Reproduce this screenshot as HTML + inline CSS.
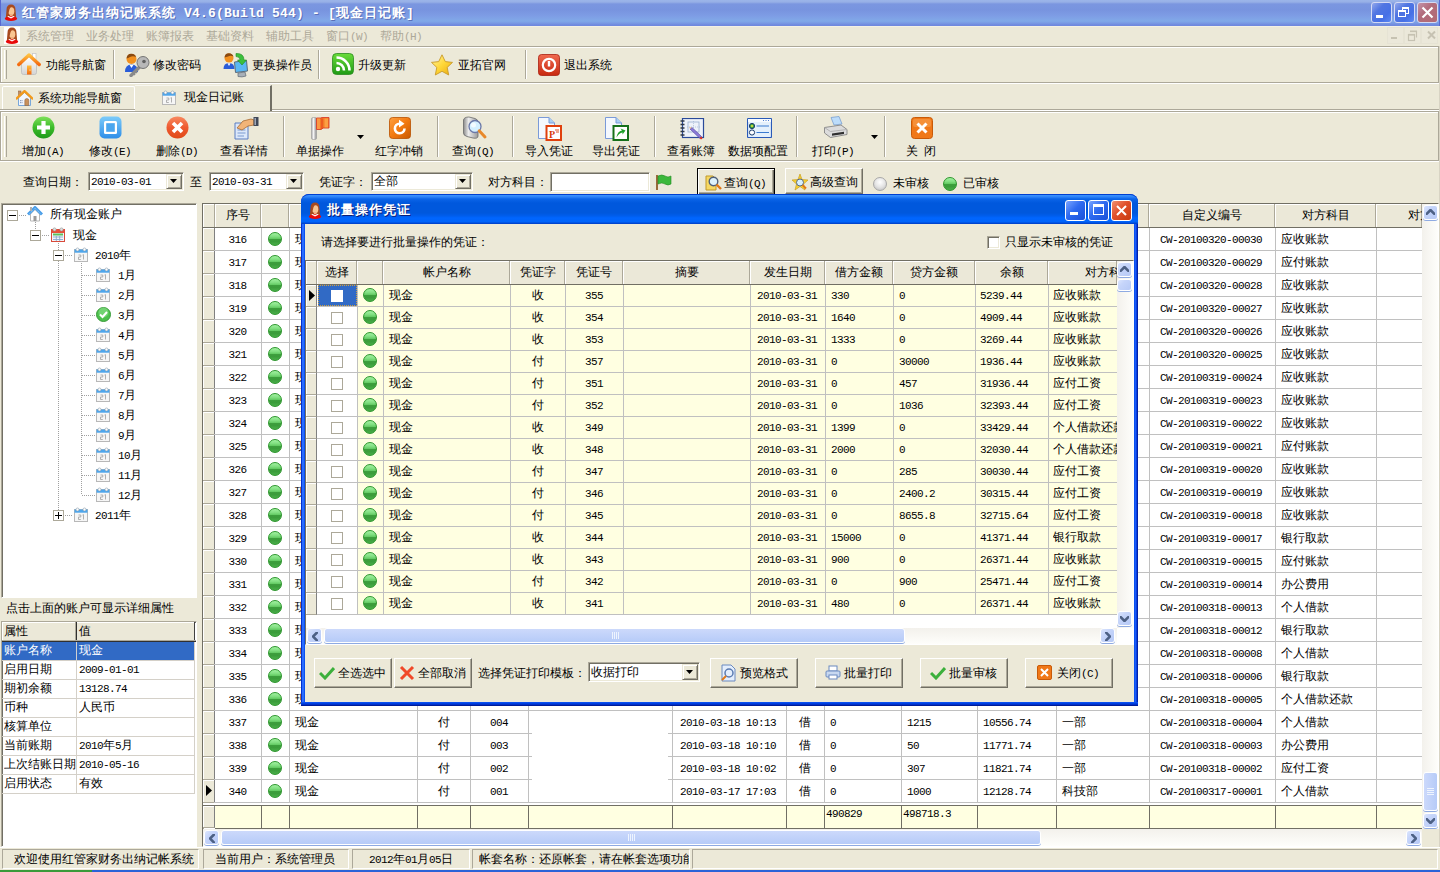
<!DOCTYPE html><html><head><meta charset="utf-8"><style>
*{margin:0;padding:0;box-sizing:border-box}
html,body{width:1440px;height:872px;overflow:hidden;background:#ECE9D8;font-family:"Liberation Sans",sans-serif;font-size:12px;color:#000;position:relative}
div{position:absolute}
.t{white-space:nowrap;line-height:14px;height:14px}
.m{font-family:"Liberation Mono",monospace;font-size:11px;letter-spacing:-0.6px}
.gray{color:#ACA899}
.ball{width:14px;height:14px;border-radius:7px;background:linear-gradient(#A2F2A2 0%,#80DE80 30%,#66CC66 46%,#3E9F3E 50%,#3A9C3A 70%,#4AAE4A 100%);border:1px solid #2C962C}
.hdr{background:#EBE8D8;border-right:1px solid #ACA899;border-bottom:1px solid #ACA899;box-shadow:inset 1px 1px 0 #fff}
.ind{background:#ECE9D8;border-right:1px solid #808080;border-bottom:1px solid #ACA899;box-shadow:inset 1px 1px 0 #fff}
.btn{background:#ECE9D8;border:1px solid #fff;border-right-color:#716F64;border-bottom-color:#716F64;box-shadow:inset -1px -1px 0 #ACA899}
.sbtn{background:linear-gradient(135deg,#DCE6FD 0%,#C6D5FA 35%,#B6C9F6 100%);border:1px solid #fff;border-radius:3px;box-shadow:0 1px 0 #8EAAE2}
.etch{border-top:1px solid #ACA899;border-left:1px solid #ACA899;box-shadow:inset 1px 1px 0 #fff,1px 1px 0 #fff}
</style></head><body>
<div style="left:0px;top:0px;width:1440px;height:26px;background:linear-gradient(#9BB5E9 0px,#97B0E6 2px,#7B96E0 4px,#7894DF 10px,#7E9DE5 16px,#81A9E8 21px,#7A9BE4 23px,#7089DE 25px)"></div>
<svg style="position:absolute;left:4px;top:4px" width="14" height="17" viewBox="0 0 14 17"><path d="M2.5 6 Q2.5 0.5 7 0.5 Q11.5 0.5 11.5 6 L12.2 14 L1.8 14Z" fill="#A84A1E"/><ellipse cx="7.3" cy="7.2" rx="3" ry="3.9" fill="#F9C592"/><rect x="6" y="10" width="2.6" height="3" fill="#F2AE80"/><path d="M3.5 8 Q4 3 7 2.5 Q5 5 4.5 9Z" fill="#A84A1E"/><ellipse cx="7" cy="14.6" rx="6.2" ry="2.3" fill="#E80A0A"/><path d="M3.2 12.6 L7 14.6 L10.8 12.6 L9.3 12 L7 13.2 L4.7 12Z" fill="#fff"/></svg>
<div class="t" style="left:22px;top:5px;height:16px;line-height:16px;color:#fff;font-weight:bold;font-size:13px;letter-spacing:1px;text-shadow:1px 1px 0 #5A70B8">红管家财务出纳记账系统<span style="font-family:Liberation Mono;font-size:13px;letter-spacing:0.2px"> V4.6(Build 544) - [</span>现金日记账<span style="font-family:Liberation Mono;font-size:13px;letter-spacing:0.2px">]</span></div>
<div style="left:1371px;top:2px;width:21px;height:21px;background:linear-gradient(135deg,#93A8EC 0%,#5176E2 35%,#4670E6 70%,#5C88F2 100%);border:1px solid #D4DAF4;border-radius:3px"></div>
<div style="left:1376px;top:15px;width:7px;height:3px;background:#fff"></div>
<div style="left:1394px;top:2px;width:21px;height:21px;background:linear-gradient(135deg,#93A8EC 0%,#5176E2 35%,#4670E6 70%,#5C88F2 100%);border:1px solid #D4DAF4;border-radius:3px"></div>
<div style="left:1402px;top:7px;width:7px;height:7px;border:1px solid #fff;border-top-width:2px"></div>
<div style="left:1398px;top:10px;width:8px;height:7px;border:1px solid #fff;border-top-width:2px;background:#4C72E2"></div>
<div style="left:1417px;top:2px;width:21px;height:21px;background:linear-gradient(135deg,#C494A8 0%,#B26C7C 40%,#B26A74 100%);border:1px solid #D4DAF4;border-radius:3px"></div>
<svg style="position:absolute;left:1421px;top:6px" width="13" height="13" viewBox="0 0 13 13"><path d="M1.5 1.5 L11.5 11.5 M11.5 1.5 L1.5 11.5" stroke="#fff" stroke-width="2.2"/></svg>
<div style="left:1439px;top:0px;width:1px;height:26px;background:#5868D0"></div>
<div style="left:0px;top:0px;width:1px;height:26px;background:#5868D0"></div>
<div style="left:0px;top:26px;width:1440px;height:1px;background:#F3F1E4"></div>
<div style="left:4px;top:27px;width:16px;height:17px;background:#fff"></div>
<svg style="position:absolute;left:5px;top:27px" width="14" height="17" viewBox="0 0 14 17"><path d="M2.5 6 Q2.5 0.5 7 0.5 Q11.5 0.5 11.5 6 L12.2 14 L1.8 14Z" fill="#A84A1E"/><ellipse cx="7.3" cy="7.2" rx="3" ry="3.9" fill="#F9C592"/><rect x="6" y="10" width="2.6" height="3" fill="#F2AE80"/><path d="M3.5 8 Q4 3 7 2.5 Q5 5 4.5 9Z" fill="#A84A1E"/><ellipse cx="7" cy="14.6" rx="6.2" ry="2.3" fill="#E80A0A"/><path d="M3.2 12.6 L7 14.6 L10.8 12.6 L9.3 12 L7 13.2 L4.7 12Z" fill="#fff"/></svg>
<div class="t gray" style="left:26px;top:29px;">系统管理</div>
<div class="t gray" style="left:86px;top:29px;">业务处理</div>
<div class="t gray" style="left:146px;top:29px;">账簿报表</div>
<div class="t gray" style="left:206px;top:29px;">基础资料</div>
<div class="t gray" style="left:266px;top:29px;">辅助工具</div>
<div class="t gray" style="left:326px;top:29px;">窗口<span class="m">(W)</span></div>
<div class="t gray" style="left:380px;top:29px;">帮助<span class="m">(H)</span></div>
<div style="left:1387px;top:27px;width:17px;height:17px;background:#EBE8DA;border:1px solid #E6E3D4"></div>
<div style="left:1404px;top:27px;width:17px;height:17px;background:#EBE8DA;border:1px solid #E6E3D4"></div>
<div style="left:1421px;top:27px;width:17px;height:17px;background:#EBE8DA;border:1px solid #E6E3D4"></div>
<svg style="position:absolute;left:1387px;top:27px" width="53" height="17" viewBox="0 0 53 17"><rect x="4" y="10" width="6" height="2" fill="#C6C2B2"/><path d="M23.5 4.5 H29.5 V10.5" fill="none" stroke="#C6C2B2" stroke-width="1.2"/><rect x="23" y="3.5" width="7" height="1.6" fill="#C6C2B2"/><rect x="21.5" y="7.5" width="6" height="6" fill="none" stroke="#C6C2B2" stroke-width="1.2"/><rect x="21" y="7" width="7" height="1.6" fill="#C6C2B2"/><path d="M41 4.5 L48 11.5 M48 4.5 L41 11.5" stroke="#C6C2B2" stroke-width="2"/></svg>
<div style="left:0px;top:46px;width:1439px;height:37px;border:1px solid #ACA899;box-shadow:inset 1px 1px 0 #fff,0 1px 0 #fff"></div>
<div style="left:4px;top:50px;width:3px;height:29px;border-left:1px solid #fff;border-right:1px solid #ACA899"></div>
<div style="left:113px;top:50px;width:2px;height:29px;border-left:1px solid #ACA899;border-right:1px solid #fff"></div>
<div style="left:318px;top:50px;width:2px;height:29px;border-left:1px solid #ACA899;border-right:1px solid #fff"></div>
<div style="left:525px;top:50px;width:2px;height:29px;border-left:1px solid #ACA899;border-right:1px solid #fff"></div>
<svg style="position:absolute;left:17px;top:52px" width="24" height="24" viewBox="0 0 24 24"><defs><linearGradient id="gh1" x1="0" y1="0" x2="0" y2="1"><stop offset="0" stop-color="#FFFFFF"/><stop offset="1" stop-color="#D4D4D4"/></linearGradient><linearGradient id="gh2" x1="0" y1="0" x2="0" y2="1"><stop offset="0" stop-color="#FFC040"/><stop offset="1" stop-color="#F46A10"/></linearGradient></defs><rect x="15.5" y="1.5" width="3.5" height="7" fill="#fff" stroke="#C8C8C8" stroke-width="0.8"/><path d="M4.5 11 L12 4.5 L19.5 11 V20.5 Q19.5 22.5 17.5 22.5 H6.5 Q4.5 22.5 4.5 20.5Z" fill="url(#gh1)" stroke="#BDBDBD" stroke-width="0.8"/><path d="M1.8 12.5 L12 3 L22.2 12.5" fill="none" stroke="url(#gh2)" stroke-width="3.4" stroke-linejoin="round" stroke-linecap="round"/><rect x="10" y="13.5" width="4.5" height="9" fill="url(#gh2)"/><circle cx="13" cy="18" r="0.6" fill="#fff"/></svg>
<div class="t" style="left:46px;top:58px;">功能导航窗</div>
<svg style="position:absolute;left:124px;top:52px" width="26" height="25" viewBox="0 0 26 25"><path d="M1 20 Q1 12.5 7.5 12.5 Q14 12.5 14 20Z" fill="#2A5CD8"/><path d="M5.5 12.8 L7.5 16 L9.5 12.8Z" fill="#fff"/><circle cx="7.5" cy="7" r="5" fill="#F2901E"/><path d="M2.5 6.5 Q3 1.5 7.5 1.8 Q11.5 2 12 5 Q9 3.5 6 5 Q4 6 2.5 6.5Z" fill="#8A4A10"/><path d="M7 23.5 L17 13.5" stroke="#8A8A8A" stroke-width="3.4" stroke-linecap="round"/><path d="M9 21 L11 23 M11 19 L13 21" stroke="#8A8A8A" stroke-width="1.6"/><circle cx="19" cy="10.5" r="6" fill="#B8B8B8" stroke="#6A6A6A" stroke-width="0.9"/><circle cx="20" cy="9.5" r="1.8" fill="#606060"/></svg>
<div class="t" style="left:153px;top:58px;">修改密码</div>
<svg style="position:absolute;left:223px;top:52px" width="27" height="26" viewBox="0 0 27 26"><path d="M0.5 17 Q0.5 11 6 11 Q11.5 11 11.5 17Z" fill="#2A5CD8"/><path d="M4.5 11.3 L6 14 L7.5 11.3Z" fill="#fff"/><circle cx="6" cy="6" r="4.5" fill="#F2901E"/><path d="M1.5 5.5 Q2 1 6 1.2 Q9.5 1.5 10.5 4.5 Q7.5 3 5 4.5 Q3 5 1.5 5.5Z" fill="#8A4A10"/><path d="M11.5 10 L23.5 8.5 L24.5 19 L12.5 20.5Z" fill="#5AB8F4" stroke="#5A6A7A" stroke-width="1"/><path d="M15 21 L22 20 L23 24 Q19 25.5 15 24.5Z" fill="#A8B0B8" stroke="#6A747E" stroke-width="0.8"/><path d="M13 1.5 Q21 1 21 8 L23.5 8 L19 13 L14.5 8 L17 8 Q17 4.5 13 4.5Z" fill="#3CC03C" stroke="#1E8A1E" stroke-width="0.6"/></svg>
<div class="t" style="left:252px;top:58px;">更换操作员</div>
<svg style="position:absolute;left:332px;top:53px" width="22" height="22" viewBox="0 0 22 22"><defs><linearGradient id="gs" x1="0" y1="0" x2="0" y2="1"><stop offset="0" stop-color="#6ADC3A"/><stop offset="1" stop-color="#1E9A14"/></linearGradient></defs><rect x="0.5" y="0.5" width="21" height="21" rx="4" fill="url(#gs)" stroke="#2A8A1E" stroke-width="0.8"/><circle cx="6" cy="16" r="2.2" fill="#fff"/><path d="M4.5 10 A7.5 7.5 0 0 1 12 17.5" fill="none" stroke="#fff" stroke-width="2.6"/><path d="M4.5 4.5 A13 13 0 0 1 17.5 17.5" fill="none" stroke="#fff" stroke-width="2.6"/></svg>
<div class="t" style="left:358px;top:58px;">升级更新</div>
<svg style="position:absolute;left:431px;top:54px" width="22" height="22" viewBox="0 0 22 22"><defs><linearGradient id="gst" x1="0" y1="0" x2="1" y2="1"><stop offset="0" stop-color="#FFF4A8"/><stop offset="0.5" stop-color="#FFD838"/><stop offset="1" stop-color="#E8A810"/></linearGradient></defs><path d="M11 0.8 L14.3 7.6 L21.5 8.4 L16.2 13.4 L17.7 21 L11 17.3 L4.3 21 L5.8 13.4 L0.5 8.4 L7.7 7.6Z" fill="url(#gst)" stroke="#C89A28" stroke-width="0.9" stroke-linejoin="round"/></svg>
<div class="t" style="left:458px;top:58px;">亚拓官网</div>
<svg style="position:absolute;left:538px;top:54px" width="22" height="22" viewBox="0 0 22 22"><defs><linearGradient id="gpw" x1="0" y1="0" x2="0" y2="1"><stop offset="0" stop-color="#F06A50"/><stop offset="1" stop-color="#C82A10"/></linearGradient></defs><rect x="0.5" y="0.5" width="21" height="21" rx="3" fill="url(#gpw)" stroke="#A82010" stroke-width="0.8"/><circle cx="11" cy="11" r="6.2" fill="none" stroke="#fff" stroke-width="2.2"/><path d="M11 7 V12.5" stroke="#fff" stroke-width="2.4"/></svg>
<div class="t" style="left:564px;top:58px;">退出系统</div>
<div style="left:0px;top:83px;width:1440px;height:1px;background:#fff"></div>
<div style="left:272px;top:109px;width:1168px;height:1px;background:#ACA899"></div>
<div style="left:272px;top:110px;width:1168px;height:1px;background:#fff"></div>
<div style="left:0px;top:109px;width:135px;height:1px;background:#ACA899"></div>
<div style="left:0px;top:110px;width:135px;height:1px;background:#fff"></div>
<div style="left:2px;top:86px;width:133px;height:23px;border-top:1px solid #fff;border-left:1px solid #fff;border-right:1px solid #fff;border-radius:2px 2px 0 0"></div>
<svg style="position:absolute;left:16px;top:90px" width="17" height="16" viewBox="0 0 17 16"><rect x="2.5" y="1" width="2.5" height="5" fill="#C89060" stroke="#8A5A30" stroke-width="0.5"/><path d="M2.5 7.5 L8.5 2.5 L14.5 7.5 V15.5 H2.5Z" fill="#F0F6FE" stroke="#6A9ED8" stroke-width="0.9"/><path d="M0.8 8.5 L8.5 1.2 L16.2 8.5" fill="none" stroke="#F29A1C" stroke-width="2.4" stroke-linejoin="round" stroke-linecap="round"/><path d="M8.8 15.5 V10.5 Q8.8 8.5 10.8 8.5 Q12.8 8.5 12.8 10.5 V15.5Z" fill="#C8905A" stroke="#8A5A30" stroke-width="0.5"/><path d="M4.5 10 V14 M6 10 V14" stroke="#7A8AA8" stroke-width="0.8" stroke-dasharray="1.2 0.8"/></svg>
<div class="t" style="left:38px;top:91px;">系统功能导航窗</div>
<div style="left:135px;top:85px;width:137px;height:26px;border-right:2px solid #716F64;border-top:1px solid #F8F7F0"></div>
<svg style="position:absolute;left:162px;top:90px" width="14" height="15" viewBox="0 0 14 15"><rect x="0.5" y="2.5" width="13" height="12" fill="#F6F6F6" stroke="#B8B8B8"/><rect x="0.5" y="2.5" width="13" height="3.2" fill="#4EA6EC"/><circle cx="3.5" cy="2.5" r="1.5" fill="#fff" stroke="#8A9AAA" stroke-width="0.6"/><circle cx="10.5" cy="2.5" r="1.5" fill="#fff" stroke="#8A9AAA" stroke-width="0.6"/><path d="M4.5 8 H6.8 V10 H4.5 V12.5 H6.8 M8.5 8 L9.5 7.6 V12.5" fill="none" stroke="#A8A8A8" stroke-width="0.9"/></svg>
<div class="t" style="left:184px;top:90px;">现金日记账</div>
<div style="left:0px;top:111px;width:1439px;height:50px;border:1px solid #ACA899;box-shadow:inset 1px 1px 0 #fff,0 1px 0 #fff"></div>
<div style="left:4px;top:116px;width:3px;height:41px;border-left:1px solid #fff;border-right:1px solid #ACA899"></div>
<div style="left:283px;top:116px;width:2px;height:41px;border-left:1px solid #ACA899;border-right:1px solid #fff"></div>
<div style="left:437px;top:116px;width:2px;height:41px;border-left:1px solid #ACA899;border-right:1px solid #fff"></div>
<div style="left:512px;top:116px;width:2px;height:41px;border-left:1px solid #ACA899;border-right:1px solid #fff"></div>
<div style="left:654px;top:116px;width:2px;height:41px;border-left:1px solid #ACA899;border-right:1px solid #fff"></div>
<div style="left:796px;top:116px;width:2px;height:41px;border-left:1px solid #ACA899;border-right:1px solid #fff"></div>
<div style="left:884px;top:116px;width:2px;height:41px;border-left:1px solid #ACA899;border-right:1px solid #fff"></div>
<svg style="position:absolute;left:32px;top:116px" width="23" height="23" viewBox="0 0 23 23"><defs><linearGradient id="ga" x1="0" y1="0" x2="0" y2="1"><stop offset="0" stop-color="#7EE05A"/><stop offset="0.5" stop-color="#3CBB2A"/><stop offset="1" stop-color="#1E9A1A"/></linearGradient></defs><circle cx="11.5" cy="11.5" r="11" fill="url(#ga)"/><path d="M11.5 5 V18 M5 11.5 H18" stroke="#fff" stroke-width="4.2"/></svg>
<div class="t" style="left:-17px;top:144px;width:120px;text-align:center">增加<span class="m">(A)</span></div>
<svg style="position:absolute;left:99px;top:116px" width="23" height="23" viewBox="0 0 23 23"><defs><linearGradient id="ge" x1="0" y1="0" x2="0" y2="1"><stop offset="0" stop-color="#7CCBFA"/><stop offset="1" stop-color="#2E8EE8"/></linearGradient></defs><rect x="0.5" y="0.5" width="22" height="22" rx="5" fill="url(#ge)"/><rect x="5" y="5" width="13" height="13" rx="1.5" fill="#fff"/><rect x="7.2" y="7.2" width="8.6" height="8.6" fill="#4AA6EE"/></svg>
<div class="t" style="left:50px;top:144px;width:120px;text-align:center">修改<span class="m">(E)</span></div>
<svg style="position:absolute;left:166px;top:116px" width="23" height="23" viewBox="0 0 23 23"><defs><linearGradient id="gd" x1="0" y1="0" x2="0" y2="1"><stop offset="0" stop-color="#F88A60"/><stop offset="0.5" stop-color="#EE5A30"/><stop offset="1" stop-color="#E04A18"/></linearGradient></defs><circle cx="11.5" cy="11.5" r="11" fill="url(#gd)"/><path d="M7 7 L16 16 M16 7 L7 16" stroke="#fff" stroke-width="3.6"/></svg>
<div class="t" style="left:117px;top:144px;width:120px;text-align:center">删除<span class="m">(D)</span></div>
<svg style="position:absolute;left:233px;top:116px" width="26" height="24" viewBox="0 0 26 24"><path d="M2 7 H15 V23 H2Z" fill="#DCE8FA" stroke="#5A7CC0"/><path d="M4.5 14 H12.5 M4.5 17 H12.5 M4.5 20 H11" stroke="#7A9AD0"/><path d="M4 12 L10 5 L18 3 L21 4 L21 9 L15 10 L9 14Z" fill="#F2B478" stroke="#A86A30" stroke-width="0.8"/><rect x="20.5" y="1" width="5" height="9" fill="#404858"/><rect x="21.5" y="2" width="1.5" height="7" fill="#A0A8B8"/></svg>
<div class="t" style="left:184px;top:144px;width:120px;text-align:center">查看详情</div>
<svg style="position:absolute;left:310px;top:117px" width="20" height="23" viewBox="0 0 20 23"><defs><linearGradient id="gp" x1="0" x2="1"><stop offset="0" stop-color="#A8A8A8"/><stop offset="0.4" stop-color="#F4F4F4"/><stop offset="1" stop-color="#8A8A8A"/></linearGradient></defs><rect x="1.5" y="0.5" width="5" height="22" rx="1.5" fill="url(#gp)" stroke="#9A9A9A" stroke-width="0.6"/><path d="M6.5 1 H11 Q12 0 13 0.5 H19 V11 H13 Q12 12 11 12.5 H6.5Z" fill="#F47A28" stroke="#D8402A" stroke-width="0.9"/><rect x="7" y="1.5" width="3" height="10.5" fill="#FCA048" opacity="0.8"/><rect x="11" y="1.5" width="2" height="10.5" fill="#E8481E" opacity="0.6"/><rect x="14.5" y="1.5" width="3.5" height="9" fill="#FFB050" opacity="0.7"/></svg>
<div class="t" style="left:260px;top:144px;width:120px;text-align:center">单据操作</div>
<svg style="position:absolute;left:357px;top:135px" width="7" height="4" viewBox="0 0 7 4"><path d="M0 0 H7 L3.5 4Z" fill="#000"/></svg>
<svg style="position:absolute;left:389px;top:117px" width="22" height="22" viewBox="0 0 22 22"><defs><linearGradient id="gr" x1="0" y1="0" x2="1" y2="1"><stop offset="0" stop-color="#FFA040"/><stop offset="0.5" stop-color="#F27A10"/><stop offset="1" stop-color="#C85800"/></linearGradient></defs><rect x="0.5" y="0.5" width="21" height="21" rx="3" fill="url(#gr)" stroke="#B85000" stroke-width="0.8"/><path d="M15.5 11.5 A4.8 4.8 0 1 1 10.5 6.7" fill="none" stroke="#fff" stroke-width="2.6"/><path d="M10 2.8 L15.5 6.8 L10 10.5Z" fill="#fff"/></svg>
<div class="t" style="left:339px;top:144px;width:120px;text-align:center">红字冲销</div>
<svg style="position:absolute;left:462px;top:116px" width="26" height="24" viewBox="0 0 26 24"><defs><linearGradient id="gq" x1="0" x2="1"><stop offset="0" stop-color="#8A8A8A"/><stop offset="0.35" stop-color="#EDEDED"/><stop offset="1" stop-color="#9A9A9A"/></linearGradient></defs><path d="M1.5 4 Q2 1 7 1 L13 2.5 Q16 3.5 16 6 V20 Q16 23 11 22 L5 20.5 Q1.5 19.5 1.5 17Z" fill="url(#gq)" stroke="#6A6A6A" stroke-width="0.8"/><circle cx="13" cy="10.5" r="6" fill="#D4F0FF" stroke="#6A78A8" stroke-width="1.3"/><circle cx="11.5" cy="9" r="2.5" fill="#fff" opacity="0.7"/><path d="M17.2 14.8 L23 21" stroke="#E8882A" stroke-width="3" stroke-linecap="round"/></svg>
<div class="t" style="left:413px;top:144px;width:120px;text-align:center">查询<span class="m">(Q)</span></div>
<svg style="position:absolute;left:537px;top:116px" width="26" height="25" viewBox="0 0 26 25"><path d="M1.5 1.5 H12 L17.5 7 V22.5 H1.5Z" fill="#F4F8FE" stroke="#7A9AD8"/><path d="M12 1.5 V7 H17.5" fill="#A8D0F4" stroke="#7A9AD8"/><rect x="9.5" y="10" width="14.5" height="14" fill="#fff" stroke="#E0400C" stroke-width="2"/><text x="15" y="22" font-size="10" font-weight="bold" fill="#D83A0A" font-family="Liberation Serif" text-anchor="middle">P</text><path d="M18 14 H22 M19 16 H22" stroke="#D83A0A" stroke-width="0.9"/></svg>
<div class="t" style="left:489px;top:144px;width:120px;text-align:center">导入凭证</div>
<svg style="position:absolute;left:604px;top:116px" width="26" height="25" viewBox="0 0 26 25"><path d="M1.5 1.5 H12 L17.5 7 V22.5 H1.5Z" fill="#F4F8FE" stroke="#7A9AD8"/><path d="M12 1.5 V7 H17.5" fill="#A8D0F4" stroke="#7A9AD8"/><rect x="9.5" y="10" width="14.5" height="14" fill="#fff" stroke="#16701A" stroke-width="2"/><path d="M12.5 21.5 Q13.5 15 18 14.5 L16.5 12.5 L21.5 14.5 L18.5 18.5 L18.5 16.5 Q15 17 12.5 21.5Z" fill="#1EA02A"/></svg>
<div class="t" style="left:556px;top:144px;width:120px;text-align:center">导出凭证</div>
<svg style="position:absolute;left:680px;top:118px" width="25" height="23" viewBox="0 0 25 23"><rect x="2.5" y="0.5" width="21" height="19" fill="#EEF2FA" stroke="#2A4A9A" stroke-width="1.2"/><path d="M0.5 3 H4.5 M0.5 6.5 H4.5 M0.5 10 H4.5 M0.5 13.5 H4.5 M0.5 17 H4.5" stroke="#303848" stroke-width="1.3"/><rect x="8" y="4" width="11" height="10" fill="none" stroke="#9AB0D0" stroke-width="0.8"/><path d="M13.5 3 V15 M7 9 H20" stroke="#9AB0D0" stroke-width="0.6" stroke-dasharray="1 1"/><path d="M10 11 L19.5 20 L21.5 18.5 L12 9.5Z" fill="#8A7AD8" stroke="#4A3A98" stroke-width="0.6"/><path d="M9 9 L10 11 L12 9.5Z" fill="#F0C090"/><path d="M19.5 20 L21.5 18.5 L22.5 20.5 L21 21.5Z" fill="#E03020"/></svg>
<div class="t" style="left:631px;top:144px;width:120px;text-align:center">查看账簿</div>
<svg style="position:absolute;left:747px;top:118px" width="25" height="20" viewBox="0 0 25 20"><rect x="0.5" y="0.5" width="24" height="19" rx="1" fill="#E4F0FC" stroke="#2A5AB8" stroke-width="1.2"/><rect x="1" y="1" width="23" height="3" fill="#F8FBFF"/><path d="M16 2.5 H17 M18.5 2.5 H19.5 M21 2.5 H22" stroke="#5080D0" stroke-width="1.2"/><circle cx="5" cy="8" r="2.6" fill="#40A840" stroke="#1A3A6A" stroke-width="1"/><circle cx="5" cy="8" r="1" fill="#F0E040"/><circle cx="5" cy="14.5" r="2.6" fill="#fff" stroke="#1A3A6A" stroke-width="1"/><path d="M9.5 8 H22 M9.5 14.5 H22" stroke="#3A7AD0" stroke-width="1.2"/></svg>
<div class="t" style="left:698px;top:144px;width:120px;text-align:center">数据项配置</div>
<svg style="position:absolute;left:823px;top:116px" width="25" height="23" viewBox="0 0 25 23"><path d="M8 1.5 L16 0.5 L19 8 L11 9Z" fill="#BCDCFA" stroke="#7AA0D0" stroke-width="0.8"/><path d="M1.5 11.5 L18 9 L24 13.5 V18.5 L7.5 21.5 L1.5 17Z" fill="#DCDCDC" stroke="#7A7A7A" stroke-width="0.8"/><path d="M1.5 11.5 L7.5 15.5 L24 13.5" fill="none" stroke="#A8A8A8" stroke-width="0.8"/><path d="M9 17.5 L21 15.8 V18 L9 19.8Z" fill="#303030"/></svg>
<div class="t" style="left:773px;top:144px;width:120px;text-align:center">打印<span class="m">(P)</span></div>
<svg style="position:absolute;left:871px;top:135px" width="7" height="4" viewBox="0 0 7 4"><path d="M0 0 H7 L3.5 4Z" fill="#000"/></svg>
<svg style="position:absolute;left:911px;top:117px" width="22" height="22" viewBox="0 0 22 22"><rect x="0.5" y="0.5" width="21" height="21" rx="3" fill="#F07818" stroke="#C85A08"/><rect x="2" y="2" width="18" height="8" rx="2" fill="#F8A050" opacity="0.6"/><path d="M6.5 6.5 L15.5 15.5 M15.5 6.5 L6.5 15.5" stroke="#fff" stroke-width="3"/></svg>
<div class="t" style="left:861px;top:144px;width:120px;text-align:center">关&nbsp;&nbsp;闭</div>
<div class="t" style="left:23px;top:175px;">查询日期：</div>
<div style="left:88px;top:172px;width:96px;height:19px;background:#fff;border:1px solid #ACA899;border-right-color:#fff;border-bottom-color:#fff;box-shadow:inset 1px 1px 0 #716F64,inset -1px -1px 0 #ECE9D8"></div>
<div style="left:166px;top:174px;width:16px;height:15px;background:#ECE9D8;border:1px solid #ECE9D8;border-right-color:#716F64;border-bottom-color:#716F64;box-shadow:inset 1px 1px 0 #fff,inset -1px -1px 0 #ACA899"></div>
<svg style="position:absolute;left:170px;top:179px" width="7" height="4" viewBox="0 0 7 4"><path d="M0 0 H7 L3.5 4Z" fill="#000"/></svg>
<div class="t" style="left:91px;top:174px;"><span class="m">2010-03-01</span></div>
<div class="t" style="left:190px;top:175px;">至</div>
<div style="left:209px;top:172px;width:95px;height:19px;background:#fff;border:1px solid #ACA899;border-right-color:#fff;border-bottom-color:#fff;box-shadow:inset 1px 1px 0 #716F64,inset -1px -1px 0 #ECE9D8"></div>
<div style="left:286px;top:174px;width:16px;height:15px;background:#ECE9D8;border:1px solid #ECE9D8;border-right-color:#716F64;border-bottom-color:#716F64;box-shadow:inset 1px 1px 0 #fff,inset -1px -1px 0 #ACA899"></div>
<svg style="position:absolute;left:290px;top:179px" width="7" height="4" viewBox="0 0 7 4"><path d="M0 0 H7 L3.5 4Z" fill="#000"/></svg>
<div class="t" style="left:212px;top:174px;"><span class="m">2010-03-31</span></div>
<div class="t" style="left:319px;top:175px;">凭证字：</div>
<div style="left:371px;top:172px;width:102px;height:19px;background:#fff;border:1px solid #ACA899;border-right-color:#fff;border-bottom-color:#fff;box-shadow:inset 1px 1px 0 #716F64,inset -1px -1px 0 #ECE9D8"></div>
<div style="left:455px;top:174px;width:16px;height:15px;background:#ECE9D8;border:1px solid #ECE9D8;border-right-color:#716F64;border-bottom-color:#716F64;box-shadow:inset 1px 1px 0 #fff,inset -1px -1px 0 #ACA899"></div>
<svg style="position:absolute;left:459px;top:179px" width="7" height="4" viewBox="0 0 7 4"><path d="M0 0 H7 L3.5 4Z" fill="#000"/></svg>
<div class="t" style="left:374px;top:174px;">全部</div>
<div class="t" style="left:488px;top:175px;">对方科目：</div>
<div style="left:550px;top:172px;width:100px;height:20px;background:#fff;border:1px solid #ACA899;border-right-color:#fff;border-bottom-color:#fff;box-shadow:inset 1px 1px 0 #716F64,inset -1px -1px 0 #ECE9D8"></div>
<svg style="position:absolute;left:655px;top:174px" width="17" height="16" viewBox="0 0 17 16"><rect x="1" y="1" width="2" height="15" fill="#9A6A3A"/><path d="M3 2 Q7 0 10 2 Q13 4 16 2 V10 Q13 12 10 10 Q7 8 3 10Z" fill="#3CB83C" stroke="#208A20" stroke-width="0.6"/></svg>
<div style="left:697px;top:168px;width:78px;height:27px;background:#ECE9D8;border:1px solid #000;box-shadow:inset 1px 1px 0 #fff,inset -1px -1px 0 #716F64,inset -2px -2px 0 #ACA899"></div>
<svg style="position:absolute;left:705px;top:174px" width="17" height="17" viewBox="0 0 17 17"><path d="M1 2 H8 L11 5 V16 H1Z" fill="#F6D862" stroke="#C09828"/><circle cx="8.5" cy="7.5" r="4.3" fill="#DDF2FC" stroke="#50607A" stroke-width="1.4"/><path d="M11.5 10.5 L16 15" stroke="#E07818" stroke-width="2.4"/></svg>
<div class="t" style="left:724px;top:176px;">查询<span class="m">(Q)</span></div>
<div style="left:785px;top:168px;width:78px;height:26px;border:1px solid #fff;border-right-color:#716F64;border-bottom-color:#716F64;box-shadow:inset -1px -1px 0 #ACA899"></div>
<svg style="position:absolute;left:791px;top:173px" width="18" height="18" viewBox="0 0 18 18"><path d="M9 1 L11 6.5 L17 7 L12.5 11 L14 17 L9 13.5 L4 17 L5.5 11 L1 7 L7 6.5Z" fill="#F8D030" stroke="#C8A020" stroke-width="0.7"/><circle cx="9" cy="9.5" r="3.5" fill="#D8F0FC" stroke="#5A6A80"/><path d="M11.5 12 L15 15.5" stroke="#E07818" stroke-width="2"/></svg>
<div class="t" style="left:810px;top:175px;">高级查询</div>
<div style="left:873px;top:177px;width:14px;height:14px;border-radius:7px;background:radial-gradient(circle at 50% 35%,#fff,#E4E4E4 50%,#B8B8B8);border:1px solid #A8A8A8"></div>
<div class="t" style="left:893px;top:176px;">未审核</div>
<div class="ball" style="left:943px;top:177px;width:14px;height:14px;border-radius:7.0px"></div>
<div class="t" style="left:963px;top:176px;">已审核</div>
<div style="left:1px;top:203px;width:196px;height:395px;background:#fff;border:1px solid #ACA899;border-right-color:#fff;border-bottom-color:#fff;box-shadow:inset 1px 1px 0 #716F64"></div>
<div style="left:7px;top:210px;width:11px;height:11px;background:#fff;border:1px solid #ACA899"></div>
<div style="left:9px;top:215px;width:7px;height:1px;background:#000"></div>
<div style="left:19px;top:215px;width:7px;height:1px;background:repeating-linear-gradient(90deg,#A0A0A0 0 1px,transparent 1px 2px)"></div>
<svg style="position:absolute;left:27px;top:206px" width="16" height="16" viewBox="0 0 16 16"><path d="M3.5 8 L8 3.5 L12.5 8 V15 H3.5Z" fill="#fff" stroke="#B8B8B8"/><rect x="6.5" y="10" width="3" height="5" fill="#9A9A9A"/><path d="M1 8.5 L8 1.5 L15 8.5" fill="none" stroke="#4A9EE8" stroke-width="3" stroke-linejoin="round"/><path d="M2.5 7.5 L8 2.2 L13.5 7.5" fill="none" stroke="#A8D8FA" stroke-width="0.8" stroke-dasharray="1 1"/><rect x="3" y="1" width="2" height="4" fill="#B0B0B0"/></svg>
<div class="t" style="left:50px;top:207px;">所有现金账户</div>
<div style="left:35px;top:222px;width:1px;height:13px;background:repeating-linear-gradient(#A0A0A0 0 1px,transparent 1px 2px)"></div>
<div style="left:30px;top:230px;width:11px;height:11px;background:#fff;border:1px solid #ACA899"></div>
<div style="left:32px;top:235px;width:7px;height:1px;background:#000"></div>
<div style="left:42px;top:235px;width:8px;height:1px;background:repeating-linear-gradient(90deg,#A0A0A0 0 1px,transparent 1px 2px)"></div>
<svg style="position:absolute;left:51px;top:227px" width="15" height="15" viewBox="0 0 15 15"><rect x="0.5" y="2.5" width="13" height="12" fill="#F4F6FA" stroke="#D84A3A"/><rect x="0.5" y="2.5" width="13" height="3.5" fill="#E8503A"/><circle cx="3.5" cy="2.5" r="1.6" fill="#E0E0E0" stroke="#909090" stroke-width="0.6"/><circle cx="10.5" cy="2.5" r="1.6" fill="#E0E0E0" stroke="#909090" stroke-width="0.6"/><rect x="2" y="6.5" width="10" height="2" fill="#5CC05C"/><path d="M2 10 H12 M2 12.5 H12 M5.3 9 V14 M8.7 9 V14" stroke="#8AAAD0" stroke-width="0.9"/></svg>
<div class="t" style="left:73px;top:228px;">现金</div>
<div style="left:58px;top:243px;width:1px;height:12px;background:repeating-linear-gradient(#A0A0A0 0 1px,transparent 1px 2px)"></div>
<div style="left:53px;top:250px;width:11px;height:11px;background:#fff;border:1px solid #ACA899"></div>
<div style="left:55px;top:255px;width:7px;height:1px;background:#000"></div>
<div style="left:65px;top:255px;width:8px;height:1px;background:repeating-linear-gradient(90deg,#A0A0A0 0 1px,transparent 1px 2px)"></div>
<svg style="position:absolute;left:74px;top:247px" width="14" height="15" viewBox="0 0 14 15"><rect x="0.5" y="2.5" width="13" height="12" fill="#F6F6F6" stroke="#B8B8B8"/><rect x="0.5" y="2.5" width="13" height="3.2" fill="#4EA6EC"/><circle cx="3.5" cy="2.5" r="1.5" fill="#fff" stroke="#8A9AAA" stroke-width="0.6"/><circle cx="10.5" cy="2.5" r="1.5" fill="#fff" stroke="#8A9AAA" stroke-width="0.6"/><path d="M4.5 8 H6.8 V10 H4.5 V12.5 H6.8 M8.5 8 L9.5 7.6 V12.5" fill="none" stroke="#A8A8A8" stroke-width="0.9"/></svg>
<div class="t" style="left:95px;top:248px;"><span class="m">2010</span>年</div>
<div style="left:58px;top:261px;width:1px;height:254px;background:repeating-linear-gradient(#A0A0A0 0 1px,transparent 1px 2px)"></div>
<div style="left:81px;top:263px;width:1px;height:232px;background:repeating-linear-gradient(#A0A0A0 0 1px,transparent 1px 2px)"></div>
<div style="left:82px;top:275px;width:13px;height:1px;background:repeating-linear-gradient(90deg,#A0A0A0 0 1px,transparent 1px 2px)"></div>
<svg style="position:absolute;left:96px;top:267px" width="14" height="15" viewBox="0 0 14 15"><rect x="0.5" y="2.5" width="13" height="12" fill="#F6F6F6" stroke="#B8B8B8"/><rect x="0.5" y="2.5" width="13" height="3.2" fill="#4EA6EC"/><circle cx="3.5" cy="2.5" r="1.5" fill="#fff" stroke="#8A9AAA" stroke-width="0.6"/><circle cx="10.5" cy="2.5" r="1.5" fill="#fff" stroke="#8A9AAA" stroke-width="0.6"/><path d="M4.5 8 H6.8 V10 H4.5 V12.5 H6.8 M8.5 8 L9.5 7.6 V12.5" fill="none" stroke="#A8A8A8" stroke-width="0.9"/></svg>
<div class="t" style="left:118px;top:268px;"><span class="m">1</span>月</div>
<div style="left:82px;top:295px;width:13px;height:1px;background:repeating-linear-gradient(90deg,#A0A0A0 0 1px,transparent 1px 2px)"></div>
<svg style="position:absolute;left:96px;top:287px" width="14" height="15" viewBox="0 0 14 15"><rect x="0.5" y="2.5" width="13" height="12" fill="#F6F6F6" stroke="#B8B8B8"/><rect x="0.5" y="2.5" width="13" height="3.2" fill="#4EA6EC"/><circle cx="3.5" cy="2.5" r="1.5" fill="#fff" stroke="#8A9AAA" stroke-width="0.6"/><circle cx="10.5" cy="2.5" r="1.5" fill="#fff" stroke="#8A9AAA" stroke-width="0.6"/><path d="M4.5 8 H6.8 V10 H4.5 V12.5 H6.8 M8.5 8 L9.5 7.6 V12.5" fill="none" stroke="#A8A8A8" stroke-width="0.9"/></svg>
<div class="t" style="left:118px;top:288px;"><span class="m">2</span>月</div>
<div style="left:82px;top:315px;width:13px;height:1px;background:repeating-linear-gradient(90deg,#A0A0A0 0 1px,transparent 1px 2px)"></div>
<svg style="position:absolute;left:96px;top:307px" width="15" height="15" viewBox="0 0 15 15"><circle cx="7.5" cy="7.5" r="7" fill="#4CC04C" stroke="#3A9A3A"/><circle cx="7.5" cy="5.5" r="5" fill="#8AE08A" opacity="0.6"/><path d="M4 7.5 L6.5 10 L11 5" fill="none" stroke="#fff" stroke-width="2"/></svg>
<div class="t" style="left:118px;top:308px;"><span class="m">3</span>月</div>
<div style="left:82px;top:335px;width:13px;height:1px;background:repeating-linear-gradient(90deg,#A0A0A0 0 1px,transparent 1px 2px)"></div>
<svg style="position:absolute;left:96px;top:327px" width="14" height="15" viewBox="0 0 14 15"><rect x="0.5" y="2.5" width="13" height="12" fill="#F6F6F6" stroke="#B8B8B8"/><rect x="0.5" y="2.5" width="13" height="3.2" fill="#4EA6EC"/><circle cx="3.5" cy="2.5" r="1.5" fill="#fff" stroke="#8A9AAA" stroke-width="0.6"/><circle cx="10.5" cy="2.5" r="1.5" fill="#fff" stroke="#8A9AAA" stroke-width="0.6"/><path d="M4.5 8 H6.8 V10 H4.5 V12.5 H6.8 M8.5 8 L9.5 7.6 V12.5" fill="none" stroke="#A8A8A8" stroke-width="0.9"/></svg>
<div class="t" style="left:118px;top:328px;"><span class="m">4</span>月</div>
<div style="left:82px;top:355px;width:13px;height:1px;background:repeating-linear-gradient(90deg,#A0A0A0 0 1px,transparent 1px 2px)"></div>
<svg style="position:absolute;left:96px;top:347px" width="14" height="15" viewBox="0 0 14 15"><rect x="0.5" y="2.5" width="13" height="12" fill="#F6F6F6" stroke="#B8B8B8"/><rect x="0.5" y="2.5" width="13" height="3.2" fill="#4EA6EC"/><circle cx="3.5" cy="2.5" r="1.5" fill="#fff" stroke="#8A9AAA" stroke-width="0.6"/><circle cx="10.5" cy="2.5" r="1.5" fill="#fff" stroke="#8A9AAA" stroke-width="0.6"/><path d="M4.5 8 H6.8 V10 H4.5 V12.5 H6.8 M8.5 8 L9.5 7.6 V12.5" fill="none" stroke="#A8A8A8" stroke-width="0.9"/></svg>
<div class="t" style="left:118px;top:348px;"><span class="m">5</span>月</div>
<div style="left:82px;top:375px;width:13px;height:1px;background:repeating-linear-gradient(90deg,#A0A0A0 0 1px,transparent 1px 2px)"></div>
<svg style="position:absolute;left:96px;top:367px" width="14" height="15" viewBox="0 0 14 15"><rect x="0.5" y="2.5" width="13" height="12" fill="#F6F6F6" stroke="#B8B8B8"/><rect x="0.5" y="2.5" width="13" height="3.2" fill="#4EA6EC"/><circle cx="3.5" cy="2.5" r="1.5" fill="#fff" stroke="#8A9AAA" stroke-width="0.6"/><circle cx="10.5" cy="2.5" r="1.5" fill="#fff" stroke="#8A9AAA" stroke-width="0.6"/><path d="M4.5 8 H6.8 V10 H4.5 V12.5 H6.8 M8.5 8 L9.5 7.6 V12.5" fill="none" stroke="#A8A8A8" stroke-width="0.9"/></svg>
<div class="t" style="left:118px;top:368px;"><span class="m">6</span>月</div>
<div style="left:82px;top:395px;width:13px;height:1px;background:repeating-linear-gradient(90deg,#A0A0A0 0 1px,transparent 1px 2px)"></div>
<svg style="position:absolute;left:96px;top:387px" width="14" height="15" viewBox="0 0 14 15"><rect x="0.5" y="2.5" width="13" height="12" fill="#F6F6F6" stroke="#B8B8B8"/><rect x="0.5" y="2.5" width="13" height="3.2" fill="#4EA6EC"/><circle cx="3.5" cy="2.5" r="1.5" fill="#fff" stroke="#8A9AAA" stroke-width="0.6"/><circle cx="10.5" cy="2.5" r="1.5" fill="#fff" stroke="#8A9AAA" stroke-width="0.6"/><path d="M4.5 8 H6.8 V10 H4.5 V12.5 H6.8 M8.5 8 L9.5 7.6 V12.5" fill="none" stroke="#A8A8A8" stroke-width="0.9"/></svg>
<div class="t" style="left:118px;top:388px;"><span class="m">7</span>月</div>
<div style="left:82px;top:415px;width:13px;height:1px;background:repeating-linear-gradient(90deg,#A0A0A0 0 1px,transparent 1px 2px)"></div>
<svg style="position:absolute;left:96px;top:407px" width="14" height="15" viewBox="0 0 14 15"><rect x="0.5" y="2.5" width="13" height="12" fill="#F6F6F6" stroke="#B8B8B8"/><rect x="0.5" y="2.5" width="13" height="3.2" fill="#4EA6EC"/><circle cx="3.5" cy="2.5" r="1.5" fill="#fff" stroke="#8A9AAA" stroke-width="0.6"/><circle cx="10.5" cy="2.5" r="1.5" fill="#fff" stroke="#8A9AAA" stroke-width="0.6"/><path d="M4.5 8 H6.8 V10 H4.5 V12.5 H6.8 M8.5 8 L9.5 7.6 V12.5" fill="none" stroke="#A8A8A8" stroke-width="0.9"/></svg>
<div class="t" style="left:118px;top:408px;"><span class="m">8</span>月</div>
<div style="left:82px;top:435px;width:13px;height:1px;background:repeating-linear-gradient(90deg,#A0A0A0 0 1px,transparent 1px 2px)"></div>
<svg style="position:absolute;left:96px;top:427px" width="14" height="15" viewBox="0 0 14 15"><rect x="0.5" y="2.5" width="13" height="12" fill="#F6F6F6" stroke="#B8B8B8"/><rect x="0.5" y="2.5" width="13" height="3.2" fill="#4EA6EC"/><circle cx="3.5" cy="2.5" r="1.5" fill="#fff" stroke="#8A9AAA" stroke-width="0.6"/><circle cx="10.5" cy="2.5" r="1.5" fill="#fff" stroke="#8A9AAA" stroke-width="0.6"/><path d="M4.5 8 H6.8 V10 H4.5 V12.5 H6.8 M8.5 8 L9.5 7.6 V12.5" fill="none" stroke="#A8A8A8" stroke-width="0.9"/></svg>
<div class="t" style="left:118px;top:428px;"><span class="m">9</span>月</div>
<div style="left:82px;top:455px;width:13px;height:1px;background:repeating-linear-gradient(90deg,#A0A0A0 0 1px,transparent 1px 2px)"></div>
<svg style="position:absolute;left:96px;top:447px" width="14" height="15" viewBox="0 0 14 15"><rect x="0.5" y="2.5" width="13" height="12" fill="#F6F6F6" stroke="#B8B8B8"/><rect x="0.5" y="2.5" width="13" height="3.2" fill="#4EA6EC"/><circle cx="3.5" cy="2.5" r="1.5" fill="#fff" stroke="#8A9AAA" stroke-width="0.6"/><circle cx="10.5" cy="2.5" r="1.5" fill="#fff" stroke="#8A9AAA" stroke-width="0.6"/><path d="M4.5 8 H6.8 V10 H4.5 V12.5 H6.8 M8.5 8 L9.5 7.6 V12.5" fill="none" stroke="#A8A8A8" stroke-width="0.9"/></svg>
<div class="t" style="left:118px;top:448px;"><span class="m">10</span>月</div>
<div style="left:82px;top:475px;width:13px;height:1px;background:repeating-linear-gradient(90deg,#A0A0A0 0 1px,transparent 1px 2px)"></div>
<svg style="position:absolute;left:96px;top:467px" width="14" height="15" viewBox="0 0 14 15"><rect x="0.5" y="2.5" width="13" height="12" fill="#F6F6F6" stroke="#B8B8B8"/><rect x="0.5" y="2.5" width="13" height="3.2" fill="#4EA6EC"/><circle cx="3.5" cy="2.5" r="1.5" fill="#fff" stroke="#8A9AAA" stroke-width="0.6"/><circle cx="10.5" cy="2.5" r="1.5" fill="#fff" stroke="#8A9AAA" stroke-width="0.6"/><path d="M4.5 8 H6.8 V10 H4.5 V12.5 H6.8 M8.5 8 L9.5 7.6 V12.5" fill="none" stroke="#A8A8A8" stroke-width="0.9"/></svg>
<div class="t" style="left:118px;top:468px;"><span class="m">11</span>月</div>
<div style="left:82px;top:495px;width:13px;height:1px;background:repeating-linear-gradient(90deg,#A0A0A0 0 1px,transparent 1px 2px)"></div>
<svg style="position:absolute;left:96px;top:487px" width="14" height="15" viewBox="0 0 14 15"><rect x="0.5" y="2.5" width="13" height="12" fill="#F6F6F6" stroke="#B8B8B8"/><rect x="0.5" y="2.5" width="13" height="3.2" fill="#4EA6EC"/><circle cx="3.5" cy="2.5" r="1.5" fill="#fff" stroke="#8A9AAA" stroke-width="0.6"/><circle cx="10.5" cy="2.5" r="1.5" fill="#fff" stroke="#8A9AAA" stroke-width="0.6"/><path d="M4.5 8 H6.8 V10 H4.5 V12.5 H6.8 M8.5 8 L9.5 7.6 V12.5" fill="none" stroke="#A8A8A8" stroke-width="0.9"/></svg>
<div class="t" style="left:118px;top:488px;"><span class="m">12</span>月</div>
<div style="left:53px;top:510px;width:11px;height:11px;background:#fff;border:1px solid #ACA899"></div>
<div style="left:55px;top:515px;width:7px;height:1px;background:#000"></div>
<div style="left:58px;top:512px;width:1px;height:7px;background:#000"></div>
<div style="left:65px;top:515px;width:8px;height:1px;background:repeating-linear-gradient(90deg,#A0A0A0 0 1px,transparent 1px 2px)"></div>
<svg style="position:absolute;left:74px;top:507px" width="14" height="15" viewBox="0 0 14 15"><rect x="0.5" y="2.5" width="13" height="12" fill="#F6F6F6" stroke="#B8B8B8"/><rect x="0.5" y="2.5" width="13" height="3.2" fill="#4EA6EC"/><circle cx="3.5" cy="2.5" r="1.5" fill="#fff" stroke="#8A9AAA" stroke-width="0.6"/><circle cx="10.5" cy="2.5" r="1.5" fill="#fff" stroke="#8A9AAA" stroke-width="0.6"/><path d="M4.5 8 H6.8 V10 H4.5 V12.5 H6.8 M8.5 8 L9.5 7.6 V12.5" fill="none" stroke="#A8A8A8" stroke-width="0.9"/></svg>
<div class="t" style="left:95px;top:508px;"><span class="m">2011</span>年</div>
<div class="t" style="left:6px;top:601px;">点击上面的账户可显示详细属性</div>
<div style="left:1px;top:621px;width:196px;height:226px;background:#fff;border:1px solid #ACA899;border-right-color:#fff;border-bottom-color:#fff;box-shadow:inset 1px 1px 0 #716F64"></div>
<div style="left:2px;top:622px;width:74px;height:19px;background:#EBE8D8;box-shadow:inset 1px 1px 0 #fff"></div>
<div style="left:76px;top:622px;width:119px;height:19px;background:#EBE8D8;box-shadow:inset 1px 1px 0 #fff;border-right:1px solid #404040"></div>
<div style="left:75px;top:622px;width:2px;height:19px;background:linear-gradient(90deg,#ACA899 50%,#303030 50%)"></div>
<div style="left:2px;top:640px;width:194px;height:2px;background:linear-gradient(#ACA899 50%,#303030 50%)"></div>
<div class="t" style="left:4px;top:624px;">属性</div>
<div class="t" style="left:79px;top:624px;">值</div>
<div style="left:2px;top:642px;width:193px;height:18px;background:#316AC5"></div>
<div style="left:76px;top:642px;width:1px;height:18px;background:#D0D0D0"></div>
<div class="t" style="left:4px;top:643px;color:#fff">账户名称</div><div class="t" style="left:79px;top:643px;color:#fff">现金</div>
<div style="left:2px;top:660px;width:193px;height:1px;background:#D4D0C8"></div>
<div style="left:2px;top:679px;width:193px;height:1px;background:#D4D0C8"></div>
<div style="left:76px;top:661px;width:1px;height:19px;background:#D4D0C8"></div>
<div class="t" style="left:4px;top:662px;width:72px;overflow:hidden">启用日期</div><div class="t" style="left:79px;top:662px"><span class="m">2009-01-01</span></div>
<div style="left:2px;top:698px;width:193px;height:1px;background:#D4D0C8"></div>
<div style="left:76px;top:680px;width:1px;height:19px;background:#D4D0C8"></div>
<div class="t" style="left:4px;top:681px;width:72px;overflow:hidden">期初余额</div><div class="t" style="left:79px;top:681px"><span class="m">13128.74</span></div>
<div style="left:2px;top:717px;width:193px;height:1px;background:#D4D0C8"></div>
<div style="left:76px;top:699px;width:1px;height:19px;background:#D4D0C8"></div>
<div class="t" style="left:4px;top:700px;width:72px;overflow:hidden">币种</div><div class="t" style="left:79px;top:700px">人民币</div>
<div style="left:2px;top:736px;width:193px;height:1px;background:#D4D0C8"></div>
<div style="left:76px;top:718px;width:1px;height:19px;background:#D4D0C8"></div>
<div class="t" style="left:4px;top:719px;width:72px;overflow:hidden">核算单位</div><div class="t" style="left:79px;top:719px"></div>
<div style="left:2px;top:755px;width:193px;height:1px;background:#D4D0C8"></div>
<div style="left:76px;top:737px;width:1px;height:19px;background:#D4D0C8"></div>
<div class="t" style="left:4px;top:738px;width:72px;overflow:hidden">当前账期</div><div class="t" style="left:79px;top:738px"><span class="m">2010</span>年<span class="m">5</span>月</div>
<div style="left:2px;top:774px;width:193px;height:1px;background:#D4D0C8"></div>
<div style="left:76px;top:756px;width:1px;height:19px;background:#D4D0C8"></div>
<div class="t" style="left:4px;top:757px;width:72px;overflow:hidden">上次结账日期</div><div class="t" style="left:79px;top:757px"><span class="m">2010-05-16</span></div>
<div style="left:2px;top:793px;width:193px;height:1px;background:#D4D0C8"></div>
<div style="left:76px;top:775px;width:1px;height:19px;background:#D4D0C8"></div>
<div class="t" style="left:4px;top:776px;width:72px;overflow:hidden">启用状态</div><div class="t" style="left:79px;top:776px">有效</div>
<div style="left:194px;top:642px;width:1px;height:151px;background:#D4D0C8"></div>
<div style="left:202px;top:203px;width:1237px;height:644px;background:#fff;border:1px solid #716F64;border-right-color:#fff;border-bottom-color:#fff;box-shadow:inset 1px 1px 0 #ACA899"></div>
<div class="hdr" style="left:203px;top:204px;width:12px;height:24px;"></div>
<div class="hdr" style="left:215px;top:204px;width:46px;height:24px;"></div>
<div class="hdr" style="left:261px;top:204px;width:28px;height:24px;"></div>
<div class="hdr" style="left:289px;top:204px;width:128px;height:24px;"></div>
<div class="hdr" style="left:417px;top:204px;width:53px;height:24px;"></div>
<div class="hdr" style="left:470px;top:204px;width:58px;height:24px;"></div>
<div class="hdr" style="left:528px;top:204px;width:144px;height:24px;"></div>
<div class="hdr" style="left:672px;top:204px;width:114px;height:24px;"></div>
<div class="hdr" style="left:786px;top:204px;width:38px;height:24px;"></div>
<div class="hdr" style="left:824px;top:204px;width:77px;height:24px;"></div>
<div class="hdr" style="left:901px;top:204px;width:76px;height:24px;"></div>
<div class="hdr" style="left:977px;top:204px;width:79px;height:24px;"></div>
<div class="hdr" style="left:1056px;top:204px;width:93px;height:24px;"></div>
<div class="hdr" style="left:1149px;top:204px;width:126px;height:24px;"></div>
<div class="hdr" style="left:1275px;top:204px;width:101px;height:24px;"></div>
<div class="hdr" style="left:1376px;top:204px;width:46px;height:24px;"></div>
<div style="left:203px;top:227px;width:1219px;height:1px;background:#716F64"></div>
<div class="t" style="left:215px;top:208px;width:46px;text-align:center">序号</div>
<div class="t" style="left:1149px;top:208px;width:126px;text-align:center">自定义编号</div>
<div class="t" style="left:1275px;top:208px;width:101px;text-align:center">对方科目</div>
<div class="t" style="left:1408px;top:208px;width:14px;overflow:hidden">对方</div>
<div class="ind" style="left:203px;top:228px;width:12px;height:23px;"></div>
<div style="left:214px;top:250px;width:1208px;height:1px;background:#C0C0C0"></div>
<div style="left:261px;top:228px;width:1px;height:23px;background:#C0C0C0"></div>
<div style="left:289px;top:228px;width:1px;height:23px;background:#C0C0C0"></div>
<div style="left:417px;top:228px;width:1px;height:23px;background:#C0C0C0"></div>
<div style="left:470px;top:228px;width:1px;height:23px;background:#C0C0C0"></div>
<div style="left:528px;top:228px;width:1px;height:23px;background:#C0C0C0"></div>
<div style="left:672px;top:228px;width:1px;height:23px;background:#C0C0C0"></div>
<div style="left:786px;top:228px;width:1px;height:23px;background:#C0C0C0"></div>
<div style="left:824px;top:228px;width:1px;height:23px;background:#C0C0C0"></div>
<div style="left:901px;top:228px;width:1px;height:23px;background:#C0C0C0"></div>
<div style="left:977px;top:228px;width:1px;height:23px;background:#C0C0C0"></div>
<div style="left:1056px;top:228px;width:1px;height:23px;background:#C0C0C0"></div>
<div style="left:1149px;top:228px;width:1px;height:23px;background:#C0C0C0"></div>
<div style="left:1275px;top:228px;width:1px;height:23px;background:#C0C0C0"></div>
<div style="left:1376px;top:228px;width:1px;height:23px;background:#C0C0C0"></div>
<div class="t" style="left:214px;top:232px;width:47px;text-align:center"><span class="m">316</span></div>
<div class="ball" style="left:268px;top:232px;width:14px;height:14px;border-radius:7.0px"></div>
<div class="t" style="left:295px;top:232px">现金</div>
<div class="t" style="left:1160px;top:232px"><span class="m">CW-20100320-00030</span></div>
<div class="t" style="left:1281px;top:232px">应收账款</div>
<div class="ind" style="left:203px;top:251px;width:12px;height:23px;"></div>
<div style="left:214px;top:273px;width:1208px;height:1px;background:#C0C0C0"></div>
<div style="left:261px;top:251px;width:1px;height:23px;background:#C0C0C0"></div>
<div style="left:289px;top:251px;width:1px;height:23px;background:#C0C0C0"></div>
<div style="left:417px;top:251px;width:1px;height:23px;background:#C0C0C0"></div>
<div style="left:470px;top:251px;width:1px;height:23px;background:#C0C0C0"></div>
<div style="left:528px;top:251px;width:1px;height:23px;background:#C0C0C0"></div>
<div style="left:672px;top:251px;width:1px;height:23px;background:#C0C0C0"></div>
<div style="left:786px;top:251px;width:1px;height:23px;background:#C0C0C0"></div>
<div style="left:824px;top:251px;width:1px;height:23px;background:#C0C0C0"></div>
<div style="left:901px;top:251px;width:1px;height:23px;background:#C0C0C0"></div>
<div style="left:977px;top:251px;width:1px;height:23px;background:#C0C0C0"></div>
<div style="left:1056px;top:251px;width:1px;height:23px;background:#C0C0C0"></div>
<div style="left:1149px;top:251px;width:1px;height:23px;background:#C0C0C0"></div>
<div style="left:1275px;top:251px;width:1px;height:23px;background:#C0C0C0"></div>
<div style="left:1376px;top:251px;width:1px;height:23px;background:#C0C0C0"></div>
<div class="t" style="left:214px;top:255px;width:47px;text-align:center"><span class="m">317</span></div>
<div class="ball" style="left:268px;top:255px;width:14px;height:14px;border-radius:7.0px"></div>
<div class="t" style="left:295px;top:255px">现金</div>
<div class="t" style="left:1160px;top:255px"><span class="m">CW-20100320-00029</span></div>
<div class="t" style="left:1281px;top:255px">应付账款</div>
<div class="ind" style="left:203px;top:274px;width:12px;height:23px;"></div>
<div style="left:214px;top:296px;width:1208px;height:1px;background:#C0C0C0"></div>
<div style="left:261px;top:274px;width:1px;height:23px;background:#C0C0C0"></div>
<div style="left:289px;top:274px;width:1px;height:23px;background:#C0C0C0"></div>
<div style="left:417px;top:274px;width:1px;height:23px;background:#C0C0C0"></div>
<div style="left:470px;top:274px;width:1px;height:23px;background:#C0C0C0"></div>
<div style="left:528px;top:274px;width:1px;height:23px;background:#C0C0C0"></div>
<div style="left:672px;top:274px;width:1px;height:23px;background:#C0C0C0"></div>
<div style="left:786px;top:274px;width:1px;height:23px;background:#C0C0C0"></div>
<div style="left:824px;top:274px;width:1px;height:23px;background:#C0C0C0"></div>
<div style="left:901px;top:274px;width:1px;height:23px;background:#C0C0C0"></div>
<div style="left:977px;top:274px;width:1px;height:23px;background:#C0C0C0"></div>
<div style="left:1056px;top:274px;width:1px;height:23px;background:#C0C0C0"></div>
<div style="left:1149px;top:274px;width:1px;height:23px;background:#C0C0C0"></div>
<div style="left:1275px;top:274px;width:1px;height:23px;background:#C0C0C0"></div>
<div style="left:1376px;top:274px;width:1px;height:23px;background:#C0C0C0"></div>
<div class="t" style="left:214px;top:278px;width:47px;text-align:center"><span class="m">318</span></div>
<div class="ball" style="left:268px;top:278px;width:14px;height:14px;border-radius:7.0px"></div>
<div class="t" style="left:295px;top:278px">现金</div>
<div class="t" style="left:1160px;top:278px"><span class="m">CW-20100320-00028</span></div>
<div class="t" style="left:1281px;top:278px">应收账款</div>
<div class="ind" style="left:203px;top:297px;width:12px;height:23px;"></div>
<div style="left:214px;top:319px;width:1208px;height:1px;background:#C0C0C0"></div>
<div style="left:261px;top:297px;width:1px;height:23px;background:#C0C0C0"></div>
<div style="left:289px;top:297px;width:1px;height:23px;background:#C0C0C0"></div>
<div style="left:417px;top:297px;width:1px;height:23px;background:#C0C0C0"></div>
<div style="left:470px;top:297px;width:1px;height:23px;background:#C0C0C0"></div>
<div style="left:528px;top:297px;width:1px;height:23px;background:#C0C0C0"></div>
<div style="left:672px;top:297px;width:1px;height:23px;background:#C0C0C0"></div>
<div style="left:786px;top:297px;width:1px;height:23px;background:#C0C0C0"></div>
<div style="left:824px;top:297px;width:1px;height:23px;background:#C0C0C0"></div>
<div style="left:901px;top:297px;width:1px;height:23px;background:#C0C0C0"></div>
<div style="left:977px;top:297px;width:1px;height:23px;background:#C0C0C0"></div>
<div style="left:1056px;top:297px;width:1px;height:23px;background:#C0C0C0"></div>
<div style="left:1149px;top:297px;width:1px;height:23px;background:#C0C0C0"></div>
<div style="left:1275px;top:297px;width:1px;height:23px;background:#C0C0C0"></div>
<div style="left:1376px;top:297px;width:1px;height:23px;background:#C0C0C0"></div>
<div class="t" style="left:214px;top:301px;width:47px;text-align:center"><span class="m">319</span></div>
<div class="ball" style="left:268px;top:301px;width:14px;height:14px;border-radius:7.0px"></div>
<div class="t" style="left:295px;top:301px">现金</div>
<div class="t" style="left:1160px;top:301px"><span class="m">CW-20100320-00027</span></div>
<div class="t" style="left:1281px;top:301px">应收账款</div>
<div class="ind" style="left:203px;top:320px;width:12px;height:23px;"></div>
<div style="left:214px;top:342px;width:1208px;height:1px;background:#C0C0C0"></div>
<div style="left:261px;top:320px;width:1px;height:23px;background:#C0C0C0"></div>
<div style="left:289px;top:320px;width:1px;height:23px;background:#C0C0C0"></div>
<div style="left:417px;top:320px;width:1px;height:23px;background:#C0C0C0"></div>
<div style="left:470px;top:320px;width:1px;height:23px;background:#C0C0C0"></div>
<div style="left:528px;top:320px;width:1px;height:23px;background:#C0C0C0"></div>
<div style="left:672px;top:320px;width:1px;height:23px;background:#C0C0C0"></div>
<div style="left:786px;top:320px;width:1px;height:23px;background:#C0C0C0"></div>
<div style="left:824px;top:320px;width:1px;height:23px;background:#C0C0C0"></div>
<div style="left:901px;top:320px;width:1px;height:23px;background:#C0C0C0"></div>
<div style="left:977px;top:320px;width:1px;height:23px;background:#C0C0C0"></div>
<div style="left:1056px;top:320px;width:1px;height:23px;background:#C0C0C0"></div>
<div style="left:1149px;top:320px;width:1px;height:23px;background:#C0C0C0"></div>
<div style="left:1275px;top:320px;width:1px;height:23px;background:#C0C0C0"></div>
<div style="left:1376px;top:320px;width:1px;height:23px;background:#C0C0C0"></div>
<div class="t" style="left:214px;top:324px;width:47px;text-align:center"><span class="m">320</span></div>
<div class="ball" style="left:268px;top:324px;width:14px;height:14px;border-radius:7.0px"></div>
<div class="t" style="left:295px;top:324px">现金</div>
<div class="t" style="left:1160px;top:324px"><span class="m">CW-20100320-00026</span></div>
<div class="t" style="left:1281px;top:324px">应收账款</div>
<div class="ind" style="left:203px;top:343px;width:12px;height:23px;"></div>
<div style="left:214px;top:365px;width:1208px;height:1px;background:#C0C0C0"></div>
<div style="left:261px;top:343px;width:1px;height:23px;background:#C0C0C0"></div>
<div style="left:289px;top:343px;width:1px;height:23px;background:#C0C0C0"></div>
<div style="left:417px;top:343px;width:1px;height:23px;background:#C0C0C0"></div>
<div style="left:470px;top:343px;width:1px;height:23px;background:#C0C0C0"></div>
<div style="left:528px;top:343px;width:1px;height:23px;background:#C0C0C0"></div>
<div style="left:672px;top:343px;width:1px;height:23px;background:#C0C0C0"></div>
<div style="left:786px;top:343px;width:1px;height:23px;background:#C0C0C0"></div>
<div style="left:824px;top:343px;width:1px;height:23px;background:#C0C0C0"></div>
<div style="left:901px;top:343px;width:1px;height:23px;background:#C0C0C0"></div>
<div style="left:977px;top:343px;width:1px;height:23px;background:#C0C0C0"></div>
<div style="left:1056px;top:343px;width:1px;height:23px;background:#C0C0C0"></div>
<div style="left:1149px;top:343px;width:1px;height:23px;background:#C0C0C0"></div>
<div style="left:1275px;top:343px;width:1px;height:23px;background:#C0C0C0"></div>
<div style="left:1376px;top:343px;width:1px;height:23px;background:#C0C0C0"></div>
<div class="t" style="left:214px;top:347px;width:47px;text-align:center"><span class="m">321</span></div>
<div class="ball" style="left:268px;top:347px;width:14px;height:14px;border-radius:7.0px"></div>
<div class="t" style="left:295px;top:347px">现金</div>
<div class="t" style="left:1160px;top:347px"><span class="m">CW-20100320-00025</span></div>
<div class="t" style="left:1281px;top:347px">应收账款</div>
<div class="ind" style="left:203px;top:366px;width:12px;height:23px;"></div>
<div style="left:214px;top:388px;width:1208px;height:1px;background:#C0C0C0"></div>
<div style="left:261px;top:366px;width:1px;height:23px;background:#C0C0C0"></div>
<div style="left:289px;top:366px;width:1px;height:23px;background:#C0C0C0"></div>
<div style="left:417px;top:366px;width:1px;height:23px;background:#C0C0C0"></div>
<div style="left:470px;top:366px;width:1px;height:23px;background:#C0C0C0"></div>
<div style="left:528px;top:366px;width:1px;height:23px;background:#C0C0C0"></div>
<div style="left:672px;top:366px;width:1px;height:23px;background:#C0C0C0"></div>
<div style="left:786px;top:366px;width:1px;height:23px;background:#C0C0C0"></div>
<div style="left:824px;top:366px;width:1px;height:23px;background:#C0C0C0"></div>
<div style="left:901px;top:366px;width:1px;height:23px;background:#C0C0C0"></div>
<div style="left:977px;top:366px;width:1px;height:23px;background:#C0C0C0"></div>
<div style="left:1056px;top:366px;width:1px;height:23px;background:#C0C0C0"></div>
<div style="left:1149px;top:366px;width:1px;height:23px;background:#C0C0C0"></div>
<div style="left:1275px;top:366px;width:1px;height:23px;background:#C0C0C0"></div>
<div style="left:1376px;top:366px;width:1px;height:23px;background:#C0C0C0"></div>
<div class="t" style="left:214px;top:370px;width:47px;text-align:center"><span class="m">322</span></div>
<div class="ball" style="left:268px;top:370px;width:14px;height:14px;border-radius:7.0px"></div>
<div class="t" style="left:295px;top:370px">现金</div>
<div class="t" style="left:1160px;top:370px"><span class="m">CW-20100319-00024</span></div>
<div class="t" style="left:1281px;top:370px">应收账款</div>
<div class="ind" style="left:203px;top:389px;width:12px;height:23px;"></div>
<div style="left:214px;top:411px;width:1208px;height:1px;background:#C0C0C0"></div>
<div style="left:261px;top:389px;width:1px;height:23px;background:#C0C0C0"></div>
<div style="left:289px;top:389px;width:1px;height:23px;background:#C0C0C0"></div>
<div style="left:417px;top:389px;width:1px;height:23px;background:#C0C0C0"></div>
<div style="left:470px;top:389px;width:1px;height:23px;background:#C0C0C0"></div>
<div style="left:528px;top:389px;width:1px;height:23px;background:#C0C0C0"></div>
<div style="left:672px;top:389px;width:1px;height:23px;background:#C0C0C0"></div>
<div style="left:786px;top:389px;width:1px;height:23px;background:#C0C0C0"></div>
<div style="left:824px;top:389px;width:1px;height:23px;background:#C0C0C0"></div>
<div style="left:901px;top:389px;width:1px;height:23px;background:#C0C0C0"></div>
<div style="left:977px;top:389px;width:1px;height:23px;background:#C0C0C0"></div>
<div style="left:1056px;top:389px;width:1px;height:23px;background:#C0C0C0"></div>
<div style="left:1149px;top:389px;width:1px;height:23px;background:#C0C0C0"></div>
<div style="left:1275px;top:389px;width:1px;height:23px;background:#C0C0C0"></div>
<div style="left:1376px;top:389px;width:1px;height:23px;background:#C0C0C0"></div>
<div class="t" style="left:214px;top:393px;width:47px;text-align:center"><span class="m">323</span></div>
<div class="ball" style="left:268px;top:393px;width:14px;height:14px;border-radius:7.0px"></div>
<div class="t" style="left:295px;top:393px">现金</div>
<div class="t" style="left:1160px;top:393px"><span class="m">CW-20100319-00023</span></div>
<div class="t" style="left:1281px;top:393px">应收账款</div>
<div class="ind" style="left:203px;top:412px;width:12px;height:23px;"></div>
<div style="left:214px;top:434px;width:1208px;height:1px;background:#C0C0C0"></div>
<div style="left:261px;top:412px;width:1px;height:23px;background:#C0C0C0"></div>
<div style="left:289px;top:412px;width:1px;height:23px;background:#C0C0C0"></div>
<div style="left:417px;top:412px;width:1px;height:23px;background:#C0C0C0"></div>
<div style="left:470px;top:412px;width:1px;height:23px;background:#C0C0C0"></div>
<div style="left:528px;top:412px;width:1px;height:23px;background:#C0C0C0"></div>
<div style="left:672px;top:412px;width:1px;height:23px;background:#C0C0C0"></div>
<div style="left:786px;top:412px;width:1px;height:23px;background:#C0C0C0"></div>
<div style="left:824px;top:412px;width:1px;height:23px;background:#C0C0C0"></div>
<div style="left:901px;top:412px;width:1px;height:23px;background:#C0C0C0"></div>
<div style="left:977px;top:412px;width:1px;height:23px;background:#C0C0C0"></div>
<div style="left:1056px;top:412px;width:1px;height:23px;background:#C0C0C0"></div>
<div style="left:1149px;top:412px;width:1px;height:23px;background:#C0C0C0"></div>
<div style="left:1275px;top:412px;width:1px;height:23px;background:#C0C0C0"></div>
<div style="left:1376px;top:412px;width:1px;height:23px;background:#C0C0C0"></div>
<div class="t" style="left:214px;top:416px;width:47px;text-align:center"><span class="m">324</span></div>
<div class="ball" style="left:268px;top:416px;width:14px;height:14px;border-radius:7.0px"></div>
<div class="t" style="left:295px;top:416px">现金</div>
<div class="t" style="left:1160px;top:416px"><span class="m">CW-20100319-00022</span></div>
<div class="t" style="left:1281px;top:416px">应收账款</div>
<div class="ind" style="left:203px;top:435px;width:12px;height:23px;"></div>
<div style="left:214px;top:457px;width:1208px;height:1px;background:#C0C0C0"></div>
<div style="left:261px;top:435px;width:1px;height:23px;background:#C0C0C0"></div>
<div style="left:289px;top:435px;width:1px;height:23px;background:#C0C0C0"></div>
<div style="left:417px;top:435px;width:1px;height:23px;background:#C0C0C0"></div>
<div style="left:470px;top:435px;width:1px;height:23px;background:#C0C0C0"></div>
<div style="left:528px;top:435px;width:1px;height:23px;background:#C0C0C0"></div>
<div style="left:672px;top:435px;width:1px;height:23px;background:#C0C0C0"></div>
<div style="left:786px;top:435px;width:1px;height:23px;background:#C0C0C0"></div>
<div style="left:824px;top:435px;width:1px;height:23px;background:#C0C0C0"></div>
<div style="left:901px;top:435px;width:1px;height:23px;background:#C0C0C0"></div>
<div style="left:977px;top:435px;width:1px;height:23px;background:#C0C0C0"></div>
<div style="left:1056px;top:435px;width:1px;height:23px;background:#C0C0C0"></div>
<div style="left:1149px;top:435px;width:1px;height:23px;background:#C0C0C0"></div>
<div style="left:1275px;top:435px;width:1px;height:23px;background:#C0C0C0"></div>
<div style="left:1376px;top:435px;width:1px;height:23px;background:#C0C0C0"></div>
<div class="t" style="left:214px;top:439px;width:47px;text-align:center"><span class="m">325</span></div>
<div class="ball" style="left:268px;top:439px;width:14px;height:14px;border-radius:7.0px"></div>
<div class="t" style="left:295px;top:439px">现金</div>
<div class="t" style="left:1160px;top:439px"><span class="m">CW-20100319-00021</span></div>
<div class="t" style="left:1281px;top:439px">应付账款</div>
<div class="ind" style="left:203px;top:458px;width:12px;height:23px;"></div>
<div style="left:214px;top:480px;width:1208px;height:1px;background:#C0C0C0"></div>
<div style="left:261px;top:458px;width:1px;height:23px;background:#C0C0C0"></div>
<div style="left:289px;top:458px;width:1px;height:23px;background:#C0C0C0"></div>
<div style="left:417px;top:458px;width:1px;height:23px;background:#C0C0C0"></div>
<div style="left:470px;top:458px;width:1px;height:23px;background:#C0C0C0"></div>
<div style="left:528px;top:458px;width:1px;height:23px;background:#C0C0C0"></div>
<div style="left:672px;top:458px;width:1px;height:23px;background:#C0C0C0"></div>
<div style="left:786px;top:458px;width:1px;height:23px;background:#C0C0C0"></div>
<div style="left:824px;top:458px;width:1px;height:23px;background:#C0C0C0"></div>
<div style="left:901px;top:458px;width:1px;height:23px;background:#C0C0C0"></div>
<div style="left:977px;top:458px;width:1px;height:23px;background:#C0C0C0"></div>
<div style="left:1056px;top:458px;width:1px;height:23px;background:#C0C0C0"></div>
<div style="left:1149px;top:458px;width:1px;height:23px;background:#C0C0C0"></div>
<div style="left:1275px;top:458px;width:1px;height:23px;background:#C0C0C0"></div>
<div style="left:1376px;top:458px;width:1px;height:23px;background:#C0C0C0"></div>
<div class="t" style="left:214px;top:462px;width:47px;text-align:center"><span class="m">326</span></div>
<div class="ball" style="left:268px;top:462px;width:14px;height:14px;border-radius:7.0px"></div>
<div class="t" style="left:295px;top:462px">现金</div>
<div class="t" style="left:1160px;top:462px"><span class="m">CW-20100319-00020</span></div>
<div class="t" style="left:1281px;top:462px">应收账款</div>
<div class="ind" style="left:203px;top:481px;width:12px;height:23px;"></div>
<div style="left:214px;top:503px;width:1208px;height:1px;background:#C0C0C0"></div>
<div style="left:261px;top:481px;width:1px;height:23px;background:#C0C0C0"></div>
<div style="left:289px;top:481px;width:1px;height:23px;background:#C0C0C0"></div>
<div style="left:417px;top:481px;width:1px;height:23px;background:#C0C0C0"></div>
<div style="left:470px;top:481px;width:1px;height:23px;background:#C0C0C0"></div>
<div style="left:528px;top:481px;width:1px;height:23px;background:#C0C0C0"></div>
<div style="left:672px;top:481px;width:1px;height:23px;background:#C0C0C0"></div>
<div style="left:786px;top:481px;width:1px;height:23px;background:#C0C0C0"></div>
<div style="left:824px;top:481px;width:1px;height:23px;background:#C0C0C0"></div>
<div style="left:901px;top:481px;width:1px;height:23px;background:#C0C0C0"></div>
<div style="left:977px;top:481px;width:1px;height:23px;background:#C0C0C0"></div>
<div style="left:1056px;top:481px;width:1px;height:23px;background:#C0C0C0"></div>
<div style="left:1149px;top:481px;width:1px;height:23px;background:#C0C0C0"></div>
<div style="left:1275px;top:481px;width:1px;height:23px;background:#C0C0C0"></div>
<div style="left:1376px;top:481px;width:1px;height:23px;background:#C0C0C0"></div>
<div class="t" style="left:214px;top:485px;width:47px;text-align:center"><span class="m">327</span></div>
<div class="ball" style="left:268px;top:485px;width:14px;height:14px;border-radius:7.0px"></div>
<div class="t" style="left:295px;top:485px">现金</div>
<div class="t" style="left:1160px;top:485px"><span class="m">CW-20100319-00019</span></div>
<div class="t" style="left:1281px;top:485px">应收账款</div>
<div class="ind" style="left:203px;top:504px;width:12px;height:23px;"></div>
<div style="left:214px;top:526px;width:1208px;height:1px;background:#C0C0C0"></div>
<div style="left:261px;top:504px;width:1px;height:23px;background:#C0C0C0"></div>
<div style="left:289px;top:504px;width:1px;height:23px;background:#C0C0C0"></div>
<div style="left:417px;top:504px;width:1px;height:23px;background:#C0C0C0"></div>
<div style="left:470px;top:504px;width:1px;height:23px;background:#C0C0C0"></div>
<div style="left:528px;top:504px;width:1px;height:23px;background:#C0C0C0"></div>
<div style="left:672px;top:504px;width:1px;height:23px;background:#C0C0C0"></div>
<div style="left:786px;top:504px;width:1px;height:23px;background:#C0C0C0"></div>
<div style="left:824px;top:504px;width:1px;height:23px;background:#C0C0C0"></div>
<div style="left:901px;top:504px;width:1px;height:23px;background:#C0C0C0"></div>
<div style="left:977px;top:504px;width:1px;height:23px;background:#C0C0C0"></div>
<div style="left:1056px;top:504px;width:1px;height:23px;background:#C0C0C0"></div>
<div style="left:1149px;top:504px;width:1px;height:23px;background:#C0C0C0"></div>
<div style="left:1275px;top:504px;width:1px;height:23px;background:#C0C0C0"></div>
<div style="left:1376px;top:504px;width:1px;height:23px;background:#C0C0C0"></div>
<div class="t" style="left:214px;top:508px;width:47px;text-align:center"><span class="m">328</span></div>
<div class="ball" style="left:268px;top:508px;width:14px;height:14px;border-radius:7.0px"></div>
<div class="t" style="left:295px;top:508px">现金</div>
<div class="t" style="left:1160px;top:508px"><span class="m">CW-20100319-00018</span></div>
<div class="t" style="left:1281px;top:508px">应收账款</div>
<div class="ind" style="left:203px;top:527px;width:12px;height:23px;"></div>
<div style="left:214px;top:549px;width:1208px;height:1px;background:#C0C0C0"></div>
<div style="left:261px;top:527px;width:1px;height:23px;background:#C0C0C0"></div>
<div style="left:289px;top:527px;width:1px;height:23px;background:#C0C0C0"></div>
<div style="left:417px;top:527px;width:1px;height:23px;background:#C0C0C0"></div>
<div style="left:470px;top:527px;width:1px;height:23px;background:#C0C0C0"></div>
<div style="left:528px;top:527px;width:1px;height:23px;background:#C0C0C0"></div>
<div style="left:672px;top:527px;width:1px;height:23px;background:#C0C0C0"></div>
<div style="left:786px;top:527px;width:1px;height:23px;background:#C0C0C0"></div>
<div style="left:824px;top:527px;width:1px;height:23px;background:#C0C0C0"></div>
<div style="left:901px;top:527px;width:1px;height:23px;background:#C0C0C0"></div>
<div style="left:977px;top:527px;width:1px;height:23px;background:#C0C0C0"></div>
<div style="left:1056px;top:527px;width:1px;height:23px;background:#C0C0C0"></div>
<div style="left:1149px;top:527px;width:1px;height:23px;background:#C0C0C0"></div>
<div style="left:1275px;top:527px;width:1px;height:23px;background:#C0C0C0"></div>
<div style="left:1376px;top:527px;width:1px;height:23px;background:#C0C0C0"></div>
<div class="t" style="left:214px;top:531px;width:47px;text-align:center"><span class="m">329</span></div>
<div class="ball" style="left:268px;top:531px;width:14px;height:14px;border-radius:7.0px"></div>
<div class="t" style="left:295px;top:531px">现金</div>
<div class="t" style="left:1160px;top:531px"><span class="m">CW-20100319-00017</span></div>
<div class="t" style="left:1281px;top:531px">银行取款</div>
<div class="ind" style="left:203px;top:550px;width:12px;height:23px;"></div>
<div style="left:214px;top:572px;width:1208px;height:1px;background:#C0C0C0"></div>
<div style="left:261px;top:550px;width:1px;height:23px;background:#C0C0C0"></div>
<div style="left:289px;top:550px;width:1px;height:23px;background:#C0C0C0"></div>
<div style="left:417px;top:550px;width:1px;height:23px;background:#C0C0C0"></div>
<div style="left:470px;top:550px;width:1px;height:23px;background:#C0C0C0"></div>
<div style="left:528px;top:550px;width:1px;height:23px;background:#C0C0C0"></div>
<div style="left:672px;top:550px;width:1px;height:23px;background:#C0C0C0"></div>
<div style="left:786px;top:550px;width:1px;height:23px;background:#C0C0C0"></div>
<div style="left:824px;top:550px;width:1px;height:23px;background:#C0C0C0"></div>
<div style="left:901px;top:550px;width:1px;height:23px;background:#C0C0C0"></div>
<div style="left:977px;top:550px;width:1px;height:23px;background:#C0C0C0"></div>
<div style="left:1056px;top:550px;width:1px;height:23px;background:#C0C0C0"></div>
<div style="left:1149px;top:550px;width:1px;height:23px;background:#C0C0C0"></div>
<div style="left:1275px;top:550px;width:1px;height:23px;background:#C0C0C0"></div>
<div style="left:1376px;top:550px;width:1px;height:23px;background:#C0C0C0"></div>
<div class="t" style="left:214px;top:554px;width:47px;text-align:center"><span class="m">330</span></div>
<div class="ball" style="left:268px;top:554px;width:14px;height:14px;border-radius:7.0px"></div>
<div class="t" style="left:295px;top:554px">现金</div>
<div class="t" style="left:1160px;top:554px"><span class="m">CW-20100319-00015</span></div>
<div class="t" style="left:1281px;top:554px">应付账款</div>
<div class="ind" style="left:203px;top:573px;width:12px;height:23px;"></div>
<div style="left:214px;top:595px;width:1208px;height:1px;background:#C0C0C0"></div>
<div style="left:261px;top:573px;width:1px;height:23px;background:#C0C0C0"></div>
<div style="left:289px;top:573px;width:1px;height:23px;background:#C0C0C0"></div>
<div style="left:417px;top:573px;width:1px;height:23px;background:#C0C0C0"></div>
<div style="left:470px;top:573px;width:1px;height:23px;background:#C0C0C0"></div>
<div style="left:528px;top:573px;width:1px;height:23px;background:#C0C0C0"></div>
<div style="left:672px;top:573px;width:1px;height:23px;background:#C0C0C0"></div>
<div style="left:786px;top:573px;width:1px;height:23px;background:#C0C0C0"></div>
<div style="left:824px;top:573px;width:1px;height:23px;background:#C0C0C0"></div>
<div style="left:901px;top:573px;width:1px;height:23px;background:#C0C0C0"></div>
<div style="left:977px;top:573px;width:1px;height:23px;background:#C0C0C0"></div>
<div style="left:1056px;top:573px;width:1px;height:23px;background:#C0C0C0"></div>
<div style="left:1149px;top:573px;width:1px;height:23px;background:#C0C0C0"></div>
<div style="left:1275px;top:573px;width:1px;height:23px;background:#C0C0C0"></div>
<div style="left:1376px;top:573px;width:1px;height:23px;background:#C0C0C0"></div>
<div class="t" style="left:214px;top:577px;width:47px;text-align:center"><span class="m">331</span></div>
<div class="ball" style="left:268px;top:577px;width:14px;height:14px;border-radius:7.0px"></div>
<div class="t" style="left:295px;top:577px">现金</div>
<div class="t" style="left:1160px;top:577px"><span class="m">CW-20100319-00014</span></div>
<div class="t" style="left:1281px;top:577px">办公费用</div>
<div class="ind" style="left:203px;top:596px;width:12px;height:23px;"></div>
<div style="left:214px;top:618px;width:1208px;height:1px;background:#C0C0C0"></div>
<div style="left:261px;top:596px;width:1px;height:23px;background:#C0C0C0"></div>
<div style="left:289px;top:596px;width:1px;height:23px;background:#C0C0C0"></div>
<div style="left:417px;top:596px;width:1px;height:23px;background:#C0C0C0"></div>
<div style="left:470px;top:596px;width:1px;height:23px;background:#C0C0C0"></div>
<div style="left:528px;top:596px;width:1px;height:23px;background:#C0C0C0"></div>
<div style="left:672px;top:596px;width:1px;height:23px;background:#C0C0C0"></div>
<div style="left:786px;top:596px;width:1px;height:23px;background:#C0C0C0"></div>
<div style="left:824px;top:596px;width:1px;height:23px;background:#C0C0C0"></div>
<div style="left:901px;top:596px;width:1px;height:23px;background:#C0C0C0"></div>
<div style="left:977px;top:596px;width:1px;height:23px;background:#C0C0C0"></div>
<div style="left:1056px;top:596px;width:1px;height:23px;background:#C0C0C0"></div>
<div style="left:1149px;top:596px;width:1px;height:23px;background:#C0C0C0"></div>
<div style="left:1275px;top:596px;width:1px;height:23px;background:#C0C0C0"></div>
<div style="left:1376px;top:596px;width:1px;height:23px;background:#C0C0C0"></div>
<div class="t" style="left:214px;top:600px;width:47px;text-align:center"><span class="m">332</span></div>
<div class="ball" style="left:268px;top:600px;width:14px;height:14px;border-radius:7.0px"></div>
<div class="t" style="left:295px;top:600px">现金</div>
<div class="t" style="left:1160px;top:600px"><span class="m">CW-20100318-00013</span></div>
<div class="t" style="left:1281px;top:600px">个人借款</div>
<div class="ind" style="left:203px;top:619px;width:12px;height:23px;"></div>
<div style="left:214px;top:641px;width:1208px;height:1px;background:#C0C0C0"></div>
<div style="left:261px;top:619px;width:1px;height:23px;background:#C0C0C0"></div>
<div style="left:289px;top:619px;width:1px;height:23px;background:#C0C0C0"></div>
<div style="left:417px;top:619px;width:1px;height:23px;background:#C0C0C0"></div>
<div style="left:470px;top:619px;width:1px;height:23px;background:#C0C0C0"></div>
<div style="left:528px;top:619px;width:1px;height:23px;background:#C0C0C0"></div>
<div style="left:672px;top:619px;width:1px;height:23px;background:#C0C0C0"></div>
<div style="left:786px;top:619px;width:1px;height:23px;background:#C0C0C0"></div>
<div style="left:824px;top:619px;width:1px;height:23px;background:#C0C0C0"></div>
<div style="left:901px;top:619px;width:1px;height:23px;background:#C0C0C0"></div>
<div style="left:977px;top:619px;width:1px;height:23px;background:#C0C0C0"></div>
<div style="left:1056px;top:619px;width:1px;height:23px;background:#C0C0C0"></div>
<div style="left:1149px;top:619px;width:1px;height:23px;background:#C0C0C0"></div>
<div style="left:1275px;top:619px;width:1px;height:23px;background:#C0C0C0"></div>
<div style="left:1376px;top:619px;width:1px;height:23px;background:#C0C0C0"></div>
<div class="t" style="left:214px;top:623px;width:47px;text-align:center"><span class="m">333</span></div>
<div class="ball" style="left:268px;top:623px;width:14px;height:14px;border-radius:7.0px"></div>
<div class="t" style="left:295px;top:623px">现金</div>
<div class="t" style="left:1160px;top:623px"><span class="m">CW-20100318-00012</span></div>
<div class="t" style="left:1281px;top:623px">银行取款</div>
<div class="ind" style="left:203px;top:642px;width:12px;height:23px;"></div>
<div style="left:214px;top:664px;width:1208px;height:1px;background:#C0C0C0"></div>
<div style="left:261px;top:642px;width:1px;height:23px;background:#C0C0C0"></div>
<div style="left:289px;top:642px;width:1px;height:23px;background:#C0C0C0"></div>
<div style="left:417px;top:642px;width:1px;height:23px;background:#C0C0C0"></div>
<div style="left:470px;top:642px;width:1px;height:23px;background:#C0C0C0"></div>
<div style="left:528px;top:642px;width:1px;height:23px;background:#C0C0C0"></div>
<div style="left:672px;top:642px;width:1px;height:23px;background:#C0C0C0"></div>
<div style="left:786px;top:642px;width:1px;height:23px;background:#C0C0C0"></div>
<div style="left:824px;top:642px;width:1px;height:23px;background:#C0C0C0"></div>
<div style="left:901px;top:642px;width:1px;height:23px;background:#C0C0C0"></div>
<div style="left:977px;top:642px;width:1px;height:23px;background:#C0C0C0"></div>
<div style="left:1056px;top:642px;width:1px;height:23px;background:#C0C0C0"></div>
<div style="left:1149px;top:642px;width:1px;height:23px;background:#C0C0C0"></div>
<div style="left:1275px;top:642px;width:1px;height:23px;background:#C0C0C0"></div>
<div style="left:1376px;top:642px;width:1px;height:23px;background:#C0C0C0"></div>
<div class="t" style="left:214px;top:646px;width:47px;text-align:center"><span class="m">334</span></div>
<div class="ball" style="left:268px;top:646px;width:14px;height:14px;border-radius:7.0px"></div>
<div class="t" style="left:295px;top:646px">现金</div>
<div class="t" style="left:1160px;top:646px"><span class="m">CW-20100318-00008</span></div>
<div class="t" style="left:1281px;top:646px">个人借款</div>
<div class="ind" style="left:203px;top:665px;width:12px;height:23px;"></div>
<div style="left:214px;top:687px;width:1208px;height:1px;background:#C0C0C0"></div>
<div style="left:261px;top:665px;width:1px;height:23px;background:#C0C0C0"></div>
<div style="left:289px;top:665px;width:1px;height:23px;background:#C0C0C0"></div>
<div style="left:417px;top:665px;width:1px;height:23px;background:#C0C0C0"></div>
<div style="left:470px;top:665px;width:1px;height:23px;background:#C0C0C0"></div>
<div style="left:528px;top:665px;width:1px;height:23px;background:#C0C0C0"></div>
<div style="left:672px;top:665px;width:1px;height:23px;background:#C0C0C0"></div>
<div style="left:786px;top:665px;width:1px;height:23px;background:#C0C0C0"></div>
<div style="left:824px;top:665px;width:1px;height:23px;background:#C0C0C0"></div>
<div style="left:901px;top:665px;width:1px;height:23px;background:#C0C0C0"></div>
<div style="left:977px;top:665px;width:1px;height:23px;background:#C0C0C0"></div>
<div style="left:1056px;top:665px;width:1px;height:23px;background:#C0C0C0"></div>
<div style="left:1149px;top:665px;width:1px;height:23px;background:#C0C0C0"></div>
<div style="left:1275px;top:665px;width:1px;height:23px;background:#C0C0C0"></div>
<div style="left:1376px;top:665px;width:1px;height:23px;background:#C0C0C0"></div>
<div class="t" style="left:214px;top:669px;width:47px;text-align:center"><span class="m">335</span></div>
<div class="ball" style="left:268px;top:669px;width:14px;height:14px;border-radius:7.0px"></div>
<div class="t" style="left:295px;top:669px">现金</div>
<div class="t" style="left:1160px;top:669px"><span class="m">CW-20100318-00006</span></div>
<div class="t" style="left:1281px;top:669px">银行取款</div>
<div class="ind" style="left:203px;top:688px;width:12px;height:23px;"></div>
<div style="left:214px;top:710px;width:1208px;height:1px;background:#C0C0C0"></div>
<div style="left:261px;top:688px;width:1px;height:23px;background:#C0C0C0"></div>
<div style="left:289px;top:688px;width:1px;height:23px;background:#C0C0C0"></div>
<div style="left:417px;top:688px;width:1px;height:23px;background:#C0C0C0"></div>
<div style="left:470px;top:688px;width:1px;height:23px;background:#C0C0C0"></div>
<div style="left:528px;top:688px;width:1px;height:23px;background:#C0C0C0"></div>
<div style="left:672px;top:688px;width:1px;height:23px;background:#C0C0C0"></div>
<div style="left:786px;top:688px;width:1px;height:23px;background:#C0C0C0"></div>
<div style="left:824px;top:688px;width:1px;height:23px;background:#C0C0C0"></div>
<div style="left:901px;top:688px;width:1px;height:23px;background:#C0C0C0"></div>
<div style="left:977px;top:688px;width:1px;height:23px;background:#C0C0C0"></div>
<div style="left:1056px;top:688px;width:1px;height:23px;background:#C0C0C0"></div>
<div style="left:1149px;top:688px;width:1px;height:23px;background:#C0C0C0"></div>
<div style="left:1275px;top:688px;width:1px;height:23px;background:#C0C0C0"></div>
<div style="left:1376px;top:688px;width:1px;height:23px;background:#C0C0C0"></div>
<div class="t" style="left:214px;top:692px;width:47px;text-align:center"><span class="m">336</span></div>
<div class="ball" style="left:268px;top:692px;width:14px;height:14px;border-radius:7.0px"></div>
<div class="t" style="left:295px;top:692px">现金</div>
<div class="t" style="left:1160px;top:692px"><span class="m">CW-20100318-00005</span></div>
<div class="t" style="left:1281px;top:692px">个人借款还款</div>
<div class="ind" style="left:203px;top:711px;width:12px;height:23px;"></div>
<div style="left:214px;top:733px;width:1208px;height:1px;background:#C0C0C0"></div>
<div style="left:261px;top:711px;width:1px;height:23px;background:#C0C0C0"></div>
<div style="left:289px;top:711px;width:1px;height:23px;background:#C0C0C0"></div>
<div style="left:417px;top:711px;width:1px;height:23px;background:#C0C0C0"></div>
<div style="left:470px;top:711px;width:1px;height:23px;background:#C0C0C0"></div>
<div style="left:528px;top:711px;width:1px;height:23px;background:#C0C0C0"></div>
<div style="left:672px;top:711px;width:1px;height:23px;background:#C0C0C0"></div>
<div style="left:786px;top:711px;width:1px;height:23px;background:#C0C0C0"></div>
<div style="left:824px;top:711px;width:1px;height:23px;background:#C0C0C0"></div>
<div style="left:901px;top:711px;width:1px;height:23px;background:#C0C0C0"></div>
<div style="left:977px;top:711px;width:1px;height:23px;background:#C0C0C0"></div>
<div style="left:1056px;top:711px;width:1px;height:23px;background:#C0C0C0"></div>
<div style="left:1149px;top:711px;width:1px;height:23px;background:#C0C0C0"></div>
<div style="left:1275px;top:711px;width:1px;height:23px;background:#C0C0C0"></div>
<div style="left:1376px;top:711px;width:1px;height:23px;background:#C0C0C0"></div>
<div class="t" style="left:214px;top:715px;width:47px;text-align:center"><span class="m">337</span></div>
<div class="ball" style="left:268px;top:715px;width:14px;height:14px;border-radius:7.0px"></div>
<div class="t" style="left:295px;top:715px">现金</div>
<div class="t" style="left:417px;top:715px;width:53px;text-align:center">付</div>
<div class="t" style="left:470px;top:715px;width:58px;text-align:center"><span class="m">004</span></div>
<div class="t" style="left:680px;top:715px"><span class="m">2010-03-18 10:13</span></div>
<div class="t" style="left:786px;top:715px;width:38px;text-align:center">借</div>
<div class="t" style="left:830px;top:715px"><span class="m">0</span></div>
<div class="t" style="left:907px;top:715px"><span class="m">1215</span></div>
<div class="t" style="left:983px;top:715px"><span class="m">10556.74</span></div>
<div class="t" style="left:1062px;top:715px">一部</div>
<div class="t" style="left:1160px;top:715px"><span class="m">CW-20100318-00004</span></div>
<div class="t" style="left:1281px;top:715px">个人借款</div>
<div class="ind" style="left:203px;top:734px;width:12px;height:23px;"></div>
<div style="left:214px;top:756px;width:1208px;height:1px;background:#C0C0C0"></div>
<div style="left:261px;top:734px;width:1px;height:23px;background:#C0C0C0"></div>
<div style="left:289px;top:734px;width:1px;height:23px;background:#C0C0C0"></div>
<div style="left:417px;top:734px;width:1px;height:23px;background:#C0C0C0"></div>
<div style="left:470px;top:734px;width:1px;height:23px;background:#C0C0C0"></div>
<div style="left:528px;top:734px;width:1px;height:23px;background:#C0C0C0"></div>
<div style="left:672px;top:734px;width:1px;height:23px;background:#C0C0C0"></div>
<div style="left:786px;top:734px;width:1px;height:23px;background:#C0C0C0"></div>
<div style="left:824px;top:734px;width:1px;height:23px;background:#C0C0C0"></div>
<div style="left:901px;top:734px;width:1px;height:23px;background:#C0C0C0"></div>
<div style="left:977px;top:734px;width:1px;height:23px;background:#C0C0C0"></div>
<div style="left:1056px;top:734px;width:1px;height:23px;background:#C0C0C0"></div>
<div style="left:1149px;top:734px;width:1px;height:23px;background:#C0C0C0"></div>
<div style="left:1275px;top:734px;width:1px;height:23px;background:#C0C0C0"></div>
<div style="left:1376px;top:734px;width:1px;height:23px;background:#C0C0C0"></div>
<div class="t" style="left:214px;top:738px;width:47px;text-align:center"><span class="m">338</span></div>
<div class="ball" style="left:268px;top:738px;width:14px;height:14px;border-radius:7.0px"></div>
<div class="t" style="left:295px;top:738px">现金</div>
<div class="t" style="left:417px;top:738px;width:53px;text-align:center">付</div>
<div class="t" style="left:470px;top:738px;width:58px;text-align:center"><span class="m">003</span></div>
<div class="t" style="left:680px;top:738px"><span class="m">2010-03-18 10:10</span></div>
<div class="t" style="left:786px;top:738px;width:38px;text-align:center">借</div>
<div class="t" style="left:830px;top:738px"><span class="m">0</span></div>
<div class="t" style="left:907px;top:738px"><span class="m">50</span></div>
<div class="t" style="left:983px;top:738px"><span class="m">11771.74</span></div>
<div class="t" style="left:1062px;top:738px">一部</div>
<div class="t" style="left:1160px;top:738px"><span class="m">CW-20100318-00003</span></div>
<div class="t" style="left:1281px;top:738px">办公费用</div>
<div class="ind" style="left:203px;top:757px;width:12px;height:23px;"></div>
<div style="left:214px;top:779px;width:1208px;height:1px;background:#C0C0C0"></div>
<div style="left:261px;top:757px;width:1px;height:23px;background:#C0C0C0"></div>
<div style="left:289px;top:757px;width:1px;height:23px;background:#C0C0C0"></div>
<div style="left:417px;top:757px;width:1px;height:23px;background:#C0C0C0"></div>
<div style="left:470px;top:757px;width:1px;height:23px;background:#C0C0C0"></div>
<div style="left:528px;top:757px;width:1px;height:23px;background:#C0C0C0"></div>
<div style="left:672px;top:757px;width:1px;height:23px;background:#C0C0C0"></div>
<div style="left:786px;top:757px;width:1px;height:23px;background:#C0C0C0"></div>
<div style="left:824px;top:757px;width:1px;height:23px;background:#C0C0C0"></div>
<div style="left:901px;top:757px;width:1px;height:23px;background:#C0C0C0"></div>
<div style="left:977px;top:757px;width:1px;height:23px;background:#C0C0C0"></div>
<div style="left:1056px;top:757px;width:1px;height:23px;background:#C0C0C0"></div>
<div style="left:1149px;top:757px;width:1px;height:23px;background:#C0C0C0"></div>
<div style="left:1275px;top:757px;width:1px;height:23px;background:#C0C0C0"></div>
<div style="left:1376px;top:757px;width:1px;height:23px;background:#C0C0C0"></div>
<div class="t" style="left:214px;top:761px;width:47px;text-align:center"><span class="m">339</span></div>
<div class="ball" style="left:268px;top:761px;width:14px;height:14px;border-radius:7.0px"></div>
<div class="t" style="left:295px;top:761px">现金</div>
<div class="t" style="left:417px;top:761px;width:53px;text-align:center">付</div>
<div class="t" style="left:470px;top:761px;width:58px;text-align:center"><span class="m">002</span></div>
<div class="t" style="left:680px;top:761px"><span class="m">2010-03-18 10:02</span></div>
<div class="t" style="left:786px;top:761px;width:38px;text-align:center">借</div>
<div class="t" style="left:830px;top:761px"><span class="m">0</span></div>
<div class="t" style="left:907px;top:761px"><span class="m">307</span></div>
<div class="t" style="left:983px;top:761px"><span class="m">11821.74</span></div>
<div class="t" style="left:1062px;top:761px">一部</div>
<div class="t" style="left:1160px;top:761px"><span class="m">CW-20100318-00002</span></div>
<div class="t" style="left:1281px;top:761px">应付工资</div>
<div class="ind" style="left:203px;top:780px;width:12px;height:23px;"></div>
<div style="left:214px;top:802px;width:1208px;height:1px;background:#C0C0C0"></div>
<div style="left:261px;top:780px;width:1px;height:23px;background:#C0C0C0"></div>
<div style="left:289px;top:780px;width:1px;height:23px;background:#C0C0C0"></div>
<div style="left:417px;top:780px;width:1px;height:23px;background:#C0C0C0"></div>
<div style="left:470px;top:780px;width:1px;height:23px;background:#C0C0C0"></div>
<div style="left:528px;top:780px;width:1px;height:23px;background:#C0C0C0"></div>
<div style="left:672px;top:780px;width:1px;height:23px;background:#C0C0C0"></div>
<div style="left:786px;top:780px;width:1px;height:23px;background:#C0C0C0"></div>
<div style="left:824px;top:780px;width:1px;height:23px;background:#C0C0C0"></div>
<div style="left:901px;top:780px;width:1px;height:23px;background:#C0C0C0"></div>
<div style="left:977px;top:780px;width:1px;height:23px;background:#C0C0C0"></div>
<div style="left:1056px;top:780px;width:1px;height:23px;background:#C0C0C0"></div>
<div style="left:1149px;top:780px;width:1px;height:23px;background:#C0C0C0"></div>
<div style="left:1275px;top:780px;width:1px;height:23px;background:#C0C0C0"></div>
<div style="left:1376px;top:780px;width:1px;height:23px;background:#C0C0C0"></div>
<div class="t" style="left:214px;top:784px;width:47px;text-align:center"><span class="m">340</span></div>
<div class="ball" style="left:268px;top:784px;width:14px;height:14px;border-radius:7.0px"></div>
<div class="t" style="left:295px;top:784px">现金</div>
<div class="t" style="left:417px;top:784px;width:53px;text-align:center">付</div>
<div class="t" style="left:470px;top:784px;width:58px;text-align:center"><span class="m">001</span></div>
<div class="t" style="left:680px;top:784px"><span class="m">2010-03-17 17:03</span></div>
<div class="t" style="left:786px;top:784px;width:38px;text-align:center">借</div>
<div class="t" style="left:830px;top:784px"><span class="m">0</span></div>
<div class="t" style="left:907px;top:784px"><span class="m">1000</span></div>
<div class="t" style="left:983px;top:784px"><span class="m">12128.74</span></div>
<div class="t" style="left:1062px;top:784px">科技部</div>
<div class="t" style="left:1160px;top:784px"><span class="m">CW-20100317-00001</span></div>
<div class="t" style="left:1281px;top:784px">个人借款</div>
<div style="left:532px;top:733px;width:136px;height:1px;background:#fff"></div>
<div style="left:532px;top:756px;width:136px;height:1px;background:#fff"></div>
<div style="left:532px;top:779px;width:136px;height:1px;background:#fff"></div>
<div class="t" style="left:207px;top:781px"></div>
<svg style="position:absolute;left:206px;top:785px" width="6" height="11" viewBox="0 0 6 11"><path d="M0 0 L6 5.5 L0 11Z" fill="#000"/></svg>
<div style="left:203px;top:803px;width:1219px;height:3px;background:#fff;border-bottom:1px solid #716F64"></div>
<div class="ind" style="left:203px;top:806px;width:12px;height:22px;"></div>
<div style="left:215px;top:806px;width:1207px;height:23px;background:#FFFFE1;border-bottom:1px solid #716F64"></div>
<div style="left:261px;top:806px;width:1px;height:22px;background:#716F64"></div>
<div style="left:289px;top:806px;width:1px;height:22px;background:#716F64"></div>
<div style="left:417px;top:806px;width:1px;height:22px;background:#716F64"></div>
<div style="left:470px;top:806px;width:1px;height:22px;background:#716F64"></div>
<div style="left:528px;top:806px;width:1px;height:22px;background:#716F64"></div>
<div style="left:672px;top:806px;width:1px;height:22px;background:#716F64"></div>
<div style="left:786px;top:806px;width:1px;height:22px;background:#716F64"></div>
<div style="left:824px;top:806px;width:1px;height:22px;background:#716F64"></div>
<div style="left:901px;top:806px;width:1px;height:22px;background:#716F64"></div>
<div style="left:977px;top:806px;width:1px;height:22px;background:#716F64"></div>
<div style="left:1056px;top:806px;width:1px;height:22px;background:#716F64"></div>
<div style="left:1149px;top:806px;width:1px;height:22px;background:#716F64"></div>
<div style="left:1275px;top:806px;width:1px;height:22px;background:#716F64"></div>
<div style="left:1376px;top:806px;width:1px;height:22px;background:#716F64"></div>
<div class="t" style="left:826px;top:806px"><span class="m">490829</span></div>
<div class="t" style="left:903px;top:806px"><span class="m">498718.3</span></div>
<div style="left:1422px;top:204px;width:16px;height:625px;background:linear-gradient(90deg,#F3F1EC,#FEFEFB)"></div>
<div class="sbtn" style="left:1423px;top:205px;width:15px;height:15px;"></div>
<svg style="position:absolute;left:1426px;top:209px" width="9" height="6" viewBox="0 0 9 6"><path d="M0.5 5 L4.5 1 L8.5 5" fill="none" stroke="#4D6185" stroke-width="2.6" stroke-linecap="square"/></svg>
<div class="sbtn" style="left:1423px;top:772px;width:15px;height:39px;background:linear-gradient(90deg,#CCD9FB,#B6CBF8)"></div>
<div style="left:1427px;top:788px;width:7px;height:1px;background:#EEF4FE"></div>
<div style="left:1427px;top:790px;width:7px;height:1px;background:#EEF4FE"></div>
<div style="left:1427px;top:792px;width:7px;height:1px;background:#EEF4FE"></div>
<div style="left:1427px;top:794px;width:7px;height:1px;background:#EEF4FE"></div>
<div class="sbtn" style="left:1423px;top:813px;width:15px;height:15px;"></div>
<svg style="position:absolute;left:1426px;top:818px" width="9" height="6" viewBox="0 0 9 6"><path d="M0.5 1 L4.5 5 L8.5 1" fill="none" stroke="#4D6185" stroke-width="2.6" stroke-linecap="square"/></svg>
<div style="left:203px;top:829px;width:1219px;height:17px;background:linear-gradient(#F3F1EC,#FEFEFB)"></div>
<div class="sbtn" style="left:204px;top:830px;width:15px;height:15px;"></div>
<svg style="position:absolute;left:209px;top:834px" width="6" height="9" viewBox="0 0 6 9"><path d="M5 0.5 L1 4.5 L5 8.5" fill="none" stroke="#4D6185" stroke-width="2.6" stroke-linecap="square"/></svg>
<div class="sbtn" style="left:221px;top:830px;width:820px;height:15px;background:linear-gradient(#CCD9FB,#B6CBF8)"></div>
<div style="left:628px;top:834px;width:1px;height:7px;background:#EEF4FE"></div>
<div style="left:630px;top:834px;width:1px;height:7px;background:#EEF4FE"></div>
<div style="left:632px;top:834px;width:1px;height:7px;background:#EEF4FE"></div>
<div style="left:634px;top:834px;width:1px;height:7px;background:#EEF4FE"></div>
<div class="sbtn" style="left:1406px;top:830px;width:15px;height:15px;"></div>
<svg style="position:absolute;left:1411px;top:834px" width="6" height="9" viewBox="0 0 6 9"><path d="M1 0.5 L5 4.5 L1 8.5" fill="none" stroke="#4D6185" stroke-width="2.6" stroke-linecap="square"/></svg>
<div style="left:1422px;top:829px;width:17px;height:18px;background:#ECE9D8"></div>
<div style="left:1439px;top:46px;width:1px;height:826px;background:#D8D4C4"></div>
<div style="left:0px;top:847px;width:1440px;height:23px;background:#ECE9D8;border-top:1px solid #fff"></div>
<div style="left:2px;top:849px;width:197px;height:20px;border:1px solid #ACA899;border-right-color:#fff;border-bottom-color:#fff"></div>
<div class="t" style="left:14px;top:852px;width:184px;overflow:hidden">欢迎使用红管家财务出纳记帐系统</div>
<div style="left:203px;top:849px;width:146px;height:20px;border:1px solid #ACA899;border-right-color:#fff;border-bottom-color:#fff"></div>
<div class="t" style="left:215px;top:852px;width:133px;overflow:hidden">当前用户：系统管理员</div>
<div style="left:352px;top:849px;width:118px;height:20px;border:1px solid #ACA899;border-right-color:#fff;border-bottom-color:#fff"></div>
<div class="t" style="left:369px;top:852px;width:100px;overflow:hidden"><span class="m">2012</span>年<span class="m">01</span>月<span class="m">05</span>日</div>
<div style="left:472px;top:849px;width:218px;height:20px;border:1px solid #ACA899;border-right-color:#fff;border-bottom-color:#fff"></div>
<div class="t" style="left:479px;top:852px;width:210px;overflow:hidden">帐套名称：还原帐套，请在帐套选项功能能</div>
<div style="left:692px;top:849px;width:746px;height:20px;border:1px solid #ACA899;border-right-color:#fff;border-bottom-color:#fff"></div>
<div style="left:0px;top:870px;width:1440px;height:2px;background:#2A62D8"></div>
<div style="left:0px;top:870px;width:92px;height:2px;background:#3A9A3A"></div>
<div style="left:301px;top:194px;width:837px;height:512px;background:#0A46E6;border-radius:8px 8px 0 0"></div>
<div style="left:301px;top:222px;width:4px;height:480px;background:linear-gradient(90deg,#0030D0 0,#0030D0 1px,#2A6CFF 1px,#2A6CFF 3px,#0A50F0 3px)"></div>
<div style="left:1134px;top:222px;width:4px;height:480px;background:linear-gradient(90deg,#0A50F0 0,#0A50F0 1px,#1A5CF8 1px,#1A5CF8 2px,#0840E0 2px,#0840E0 3px,#0020A8 3px)"></div>
<div style="left:301px;top:702px;width:837px;height:4px;background:linear-gradient(#0A50F0 0,#0A50F0 1px,#0040E0 1px,#0040E0 2px,#0030C8 2px,#0030C8 3px,#001C98 3px)"></div>
<div style="left:301px;top:194px;width:837px;height:30px;border-radius:8px 8px 0 0;border-top:1px solid #0040D0;background:linear-gradient(#3D95FF 0px,#2A80F8 2px,#0A64E8 4px,#0058DD 8px,#0058DD 18px,#005EEE 21px,#0066FF 23px,#0064FA 27px,#0048D4 28px,#0040C8 29px)"></div>
<svg style="position:absolute;left:308px;top:202px" width="14" height="17" viewBox="0 0 14 17"><path d="M2.5 6 Q2.5 0.5 7 0.5 Q11.5 0.5 11.5 6 L12.2 14 L1.8 14Z" fill="#A84A1E"/><ellipse cx="7.3" cy="7.2" rx="3" ry="3.9" fill="#F9C592"/><rect x="6" y="10" width="2.6" height="3" fill="#F2AE80"/><path d="M3.5 8 Q4 3 7 2.5 Q5 5 4.5 9Z" fill="#A84A1E"/><ellipse cx="7" cy="14.6" rx="6.2" ry="2.3" fill="#E80A0A"/><path d="M3.2 12.6 L7 14.6 L10.8 12.6 L9.3 12 L7 13.2 L4.7 12Z" fill="#fff"/></svg>
<div class="t" style="left:327px;top:202px;height:16px;line-height:16px;color:#fff;font-weight:bold;font-size:13px;letter-spacing:1px;text-shadow:1px 1px 0 #0A1E7A">批量操作凭证</div>
<div style="left:1065px;top:200px;width:21px;height:21px;background:linear-gradient(135deg,#7AA4FF,#2E6AF0 45%,#1A50D8);border:1px solid #fff;border-radius:3px"></div>
<div style="left:1070px;top:212px;width:8px;height:3px;background:#fff"></div>
<div style="left:1088px;top:200px;width:21px;height:21px;background:linear-gradient(135deg,#7AA4FF,#2E6AF0 45%,#1A50D8);border:1px solid #fff;border-radius:3px"></div>
<div style="left:1093px;top:204px;width:11px;height:11px;border:1px solid #fff;border-top-width:3px"></div>
<div style="left:1111px;top:200px;width:21px;height:21px;background:linear-gradient(135deg,#F09070,#E0502A 45%,#C83A10);border:1px solid #fff;border-radius:3px"></div>
<svg style="position:absolute;left:1115px;top:204px" width="13" height="13" viewBox="0 0 13 13"><path d="M2 2 L11 11 M11 2 L2 11" stroke="#fff" stroke-width="2"/></svg>
<div style="left:305px;top:224px;width:829px;height:478px;background:#ECE9D8"></div>
<div class="t" style="left:321px;top:235px;">请选择要进行批量操作的凭证：</div>
<div style="left:987px;top:236px;width:13px;height:13px;background:#fff;border:1px solid #ACA899;border-right-color:#fff;border-bottom-color:#fff;box-shadow:inset 1px 1px 0 #716F64,inset -1px -1px 0 #ECE9D8"></div>
<div class="t" style="left:1005px;top:235px;">只显示未审核的凭证</div>
<div style="left:305px;top:260px;width:829px;height:385px;background:#fff;border:1px solid #716F64;border-right-color:#fff;border-bottom-color:#fff"></div>
<div class="hdr" style="left:306px;top:261px;width:11px;height:24px;"></div>
<div class="hdr" style="left:317px;top:261px;width:40px;height:24px;"></div>
<div class="hdr" style="left:357px;top:261px;width:26px;height:24px;"></div>
<div class="hdr" style="left:383px;top:261px;width:127px;height:24px;"></div>
<div class="hdr" style="left:510px;top:261px;width:55px;height:24px;"></div>
<div class="hdr" style="left:565px;top:261px;width:58px;height:24px;"></div>
<div class="hdr" style="left:623px;top:261px;width:127px;height:24px;"></div>
<div class="hdr" style="left:750px;top:261px;width:75px;height:24px;"></div>
<div class="hdr" style="left:825px;top:261px;width:68px;height:24px;"></div>
<div class="hdr" style="left:893px;top:261px;width:82px;height:24px;"></div>
<div class="hdr" style="left:975px;top:261px;width:73px;height:24px;"></div>
<div class="hdr" style="left:1048px;top:261px;width:69px;height:24px;"></div>
<div style="left:306px;top:284px;width:811px;height:1px;background:#716F64"></div>
<div class="t" style="left:317px;top:265px;width:40px;text-align:center">选择</div>
<div class="t" style="left:383px;top:265px;width:127px;text-align:center">帐户名称</div>
<div class="t" style="left:510px;top:265px;width:55px;text-align:center">凭证字</div>
<div class="t" style="left:565px;top:265px;width:58px;text-align:center">凭证号</div>
<div class="t" style="left:623px;top:265px;width:127px;text-align:center">摘要</div>
<div class="t" style="left:750px;top:265px;width:75px;text-align:center">发生日期</div>
<div class="t" style="left:825px;top:265px;width:68px;text-align:center">借方金额</div>
<div class="t" style="left:893px;top:265px;width:82px;text-align:center">贷方金额</div>
<div class="t" style="left:975px;top:265px;width:73px;text-align:center">余额</div>
<div class="t" style="left:1085px;top:265px;width:32px;overflow:hidden">对方科</div>
<div class="ind" style="left:306px;top:285px;width:11px;height:22px;"></div>
<div style="left:317px;top:285px;width:40px;height:22px;background:#fff"></div>
<div style="left:357px;top:285px;width:760px;height:22px;background:#FFFFE1"></div>
<div style="left:317px;top:306px;width:800px;height:1px;background:#C0C0C0"></div>
<div style="left:357px;top:285px;width:1px;height:22px;background:#C0C0C0"></div>
<div style="left:383px;top:285px;width:1px;height:22px;background:#C0C0C0"></div>
<div style="left:510px;top:285px;width:1px;height:22px;background:#C0C0C0"></div>
<div style="left:565px;top:285px;width:1px;height:22px;background:#C0C0C0"></div>
<div style="left:623px;top:285px;width:1px;height:22px;background:#C0C0C0"></div>
<div style="left:750px;top:285px;width:1px;height:22px;background:#C0C0C0"></div>
<div style="left:825px;top:285px;width:1px;height:22px;background:#C0C0C0"></div>
<div style="left:893px;top:285px;width:1px;height:22px;background:#C0C0C0"></div>
<div style="left:975px;top:285px;width:1px;height:22px;background:#C0C0C0"></div>
<div style="left:1048px;top:285px;width:1px;height:22px;background:#C0C0C0"></div>
<div style="left:318px;top:285px;width:39px;height:21px;background:#316AC5;border:1px dotted #D0A040"></div>
<div style="left:331px;top:290px;width:12px;height:12px;background:#fff;border:1px solid #fff"></div>
<div class="ball" style="left:363px;top:288px;width:14px;height:14px;border-radius:7.0px"></div>
<div class="t" style="left:389px;top:288px">现金</div>
<div class="t" style="left:510px;top:288px;width:55px;text-align:center">收</div>
<div class="t" style="left:565px;top:288px;width:58px;text-align:center"><span class="m">355</span></div>
<div class="t" style="left:757px;top:288px"><span class="m">2010-03-31</span></div>
<div class="t" style="left:831px;top:288px"><span class="m">330</span></div>
<div class="t" style="left:899px;top:288px"><span class="m">0</span></div>
<div class="t" style="left:980px;top:288px"><span class="m">5239.44</span></div>
<div class="t" style="left:1053px;top:288px;width:64px;overflow:hidden">应收账款</div>
<div class="ind" style="left:306px;top:307px;width:11px;height:22px;"></div>
<div style="left:317px;top:307px;width:40px;height:22px;background:#fff"></div>
<div style="left:357px;top:307px;width:760px;height:22px;background:#FFFFE1"></div>
<div style="left:317px;top:328px;width:800px;height:1px;background:#C0C0C0"></div>
<div style="left:357px;top:307px;width:1px;height:22px;background:#C0C0C0"></div>
<div style="left:383px;top:307px;width:1px;height:22px;background:#C0C0C0"></div>
<div style="left:510px;top:307px;width:1px;height:22px;background:#C0C0C0"></div>
<div style="left:565px;top:307px;width:1px;height:22px;background:#C0C0C0"></div>
<div style="left:623px;top:307px;width:1px;height:22px;background:#C0C0C0"></div>
<div style="left:750px;top:307px;width:1px;height:22px;background:#C0C0C0"></div>
<div style="left:825px;top:307px;width:1px;height:22px;background:#C0C0C0"></div>
<div style="left:893px;top:307px;width:1px;height:22px;background:#C0C0C0"></div>
<div style="left:975px;top:307px;width:1px;height:22px;background:#C0C0C0"></div>
<div style="left:1048px;top:307px;width:1px;height:22px;background:#C0C0C0"></div>
<div style="left:331px;top:312px;width:12px;height:12px;background:#fff;border:1px solid #ACA899"></div>
<div class="ball" style="left:363px;top:310px;width:14px;height:14px;border-radius:7.0px"></div>
<div class="t" style="left:389px;top:310px">现金</div>
<div class="t" style="left:510px;top:310px;width:55px;text-align:center">收</div>
<div class="t" style="left:565px;top:310px;width:58px;text-align:center"><span class="m">354</span></div>
<div class="t" style="left:757px;top:310px"><span class="m">2010-03-31</span></div>
<div class="t" style="left:831px;top:310px"><span class="m">1640</span></div>
<div class="t" style="left:899px;top:310px"><span class="m">0</span></div>
<div class="t" style="left:980px;top:310px"><span class="m">4909.44</span></div>
<div class="t" style="left:1053px;top:310px;width:64px;overflow:hidden">应收账款</div>
<div class="ind" style="left:306px;top:329px;width:11px;height:22px;"></div>
<div style="left:317px;top:329px;width:40px;height:22px;background:#fff"></div>
<div style="left:357px;top:329px;width:760px;height:22px;background:#FFFFE1"></div>
<div style="left:317px;top:350px;width:800px;height:1px;background:#C0C0C0"></div>
<div style="left:357px;top:329px;width:1px;height:22px;background:#C0C0C0"></div>
<div style="left:383px;top:329px;width:1px;height:22px;background:#C0C0C0"></div>
<div style="left:510px;top:329px;width:1px;height:22px;background:#C0C0C0"></div>
<div style="left:565px;top:329px;width:1px;height:22px;background:#C0C0C0"></div>
<div style="left:623px;top:329px;width:1px;height:22px;background:#C0C0C0"></div>
<div style="left:750px;top:329px;width:1px;height:22px;background:#C0C0C0"></div>
<div style="left:825px;top:329px;width:1px;height:22px;background:#C0C0C0"></div>
<div style="left:893px;top:329px;width:1px;height:22px;background:#C0C0C0"></div>
<div style="left:975px;top:329px;width:1px;height:22px;background:#C0C0C0"></div>
<div style="left:1048px;top:329px;width:1px;height:22px;background:#C0C0C0"></div>
<div style="left:331px;top:334px;width:12px;height:12px;background:#fff;border:1px solid #ACA899"></div>
<div class="ball" style="left:363px;top:332px;width:14px;height:14px;border-radius:7.0px"></div>
<div class="t" style="left:389px;top:332px">现金</div>
<div class="t" style="left:510px;top:332px;width:55px;text-align:center">收</div>
<div class="t" style="left:565px;top:332px;width:58px;text-align:center"><span class="m">353</span></div>
<div class="t" style="left:757px;top:332px"><span class="m">2010-03-31</span></div>
<div class="t" style="left:831px;top:332px"><span class="m">1333</span></div>
<div class="t" style="left:899px;top:332px"><span class="m">0</span></div>
<div class="t" style="left:980px;top:332px"><span class="m">3269.44</span></div>
<div class="t" style="left:1053px;top:332px;width:64px;overflow:hidden">应收账款</div>
<div class="ind" style="left:306px;top:351px;width:11px;height:22px;"></div>
<div style="left:317px;top:351px;width:40px;height:22px;background:#fff"></div>
<div style="left:357px;top:351px;width:760px;height:22px;background:#FFFFE1"></div>
<div style="left:317px;top:372px;width:800px;height:1px;background:#C0C0C0"></div>
<div style="left:357px;top:351px;width:1px;height:22px;background:#C0C0C0"></div>
<div style="left:383px;top:351px;width:1px;height:22px;background:#C0C0C0"></div>
<div style="left:510px;top:351px;width:1px;height:22px;background:#C0C0C0"></div>
<div style="left:565px;top:351px;width:1px;height:22px;background:#C0C0C0"></div>
<div style="left:623px;top:351px;width:1px;height:22px;background:#C0C0C0"></div>
<div style="left:750px;top:351px;width:1px;height:22px;background:#C0C0C0"></div>
<div style="left:825px;top:351px;width:1px;height:22px;background:#C0C0C0"></div>
<div style="left:893px;top:351px;width:1px;height:22px;background:#C0C0C0"></div>
<div style="left:975px;top:351px;width:1px;height:22px;background:#C0C0C0"></div>
<div style="left:1048px;top:351px;width:1px;height:22px;background:#C0C0C0"></div>
<div style="left:331px;top:356px;width:12px;height:12px;background:#fff;border:1px solid #ACA899"></div>
<div class="ball" style="left:363px;top:354px;width:14px;height:14px;border-radius:7.0px"></div>
<div class="t" style="left:389px;top:354px">现金</div>
<div class="t" style="left:510px;top:354px;width:55px;text-align:center">付</div>
<div class="t" style="left:565px;top:354px;width:58px;text-align:center"><span class="m">357</span></div>
<div class="t" style="left:757px;top:354px"><span class="m">2010-03-31</span></div>
<div class="t" style="left:831px;top:354px"><span class="m">0</span></div>
<div class="t" style="left:899px;top:354px"><span class="m">30000</span></div>
<div class="t" style="left:980px;top:354px"><span class="m">1936.44</span></div>
<div class="t" style="left:1053px;top:354px;width:64px;overflow:hidden">应收账款</div>
<div class="ind" style="left:306px;top:373px;width:11px;height:22px;"></div>
<div style="left:317px;top:373px;width:40px;height:22px;background:#fff"></div>
<div style="left:357px;top:373px;width:760px;height:22px;background:#FFFFE1"></div>
<div style="left:317px;top:394px;width:800px;height:1px;background:#C0C0C0"></div>
<div style="left:357px;top:373px;width:1px;height:22px;background:#C0C0C0"></div>
<div style="left:383px;top:373px;width:1px;height:22px;background:#C0C0C0"></div>
<div style="left:510px;top:373px;width:1px;height:22px;background:#C0C0C0"></div>
<div style="left:565px;top:373px;width:1px;height:22px;background:#C0C0C0"></div>
<div style="left:623px;top:373px;width:1px;height:22px;background:#C0C0C0"></div>
<div style="left:750px;top:373px;width:1px;height:22px;background:#C0C0C0"></div>
<div style="left:825px;top:373px;width:1px;height:22px;background:#C0C0C0"></div>
<div style="left:893px;top:373px;width:1px;height:22px;background:#C0C0C0"></div>
<div style="left:975px;top:373px;width:1px;height:22px;background:#C0C0C0"></div>
<div style="left:1048px;top:373px;width:1px;height:22px;background:#C0C0C0"></div>
<div style="left:331px;top:378px;width:12px;height:12px;background:#fff;border:1px solid #ACA899"></div>
<div class="ball" style="left:363px;top:376px;width:14px;height:14px;border-radius:7.0px"></div>
<div class="t" style="left:389px;top:376px">现金</div>
<div class="t" style="left:510px;top:376px;width:55px;text-align:center">付</div>
<div class="t" style="left:565px;top:376px;width:58px;text-align:center"><span class="m">351</span></div>
<div class="t" style="left:757px;top:376px"><span class="m">2010-03-31</span></div>
<div class="t" style="left:831px;top:376px"><span class="m">0</span></div>
<div class="t" style="left:899px;top:376px"><span class="m">457</span></div>
<div class="t" style="left:980px;top:376px"><span class="m">31936.44</span></div>
<div class="t" style="left:1053px;top:376px;width:64px;overflow:hidden">应付工资</div>
<div class="ind" style="left:306px;top:395px;width:11px;height:22px;"></div>
<div style="left:317px;top:395px;width:40px;height:22px;background:#fff"></div>
<div style="left:357px;top:395px;width:760px;height:22px;background:#FFFFE1"></div>
<div style="left:317px;top:416px;width:800px;height:1px;background:#C0C0C0"></div>
<div style="left:357px;top:395px;width:1px;height:22px;background:#C0C0C0"></div>
<div style="left:383px;top:395px;width:1px;height:22px;background:#C0C0C0"></div>
<div style="left:510px;top:395px;width:1px;height:22px;background:#C0C0C0"></div>
<div style="left:565px;top:395px;width:1px;height:22px;background:#C0C0C0"></div>
<div style="left:623px;top:395px;width:1px;height:22px;background:#C0C0C0"></div>
<div style="left:750px;top:395px;width:1px;height:22px;background:#C0C0C0"></div>
<div style="left:825px;top:395px;width:1px;height:22px;background:#C0C0C0"></div>
<div style="left:893px;top:395px;width:1px;height:22px;background:#C0C0C0"></div>
<div style="left:975px;top:395px;width:1px;height:22px;background:#C0C0C0"></div>
<div style="left:1048px;top:395px;width:1px;height:22px;background:#C0C0C0"></div>
<div style="left:331px;top:400px;width:12px;height:12px;background:#fff;border:1px solid #ACA899"></div>
<div class="ball" style="left:363px;top:398px;width:14px;height:14px;border-radius:7.0px"></div>
<div class="t" style="left:389px;top:398px">现金</div>
<div class="t" style="left:510px;top:398px;width:55px;text-align:center">付</div>
<div class="t" style="left:565px;top:398px;width:58px;text-align:center"><span class="m">352</span></div>
<div class="t" style="left:757px;top:398px"><span class="m">2010-03-31</span></div>
<div class="t" style="left:831px;top:398px"><span class="m">0</span></div>
<div class="t" style="left:899px;top:398px"><span class="m">1036</span></div>
<div class="t" style="left:980px;top:398px"><span class="m">32393.44</span></div>
<div class="t" style="left:1053px;top:398px;width:64px;overflow:hidden">应付工资</div>
<div class="ind" style="left:306px;top:417px;width:11px;height:22px;"></div>
<div style="left:317px;top:417px;width:40px;height:22px;background:#fff"></div>
<div style="left:357px;top:417px;width:760px;height:22px;background:#FFFFE1"></div>
<div style="left:317px;top:438px;width:800px;height:1px;background:#C0C0C0"></div>
<div style="left:357px;top:417px;width:1px;height:22px;background:#C0C0C0"></div>
<div style="left:383px;top:417px;width:1px;height:22px;background:#C0C0C0"></div>
<div style="left:510px;top:417px;width:1px;height:22px;background:#C0C0C0"></div>
<div style="left:565px;top:417px;width:1px;height:22px;background:#C0C0C0"></div>
<div style="left:623px;top:417px;width:1px;height:22px;background:#C0C0C0"></div>
<div style="left:750px;top:417px;width:1px;height:22px;background:#C0C0C0"></div>
<div style="left:825px;top:417px;width:1px;height:22px;background:#C0C0C0"></div>
<div style="left:893px;top:417px;width:1px;height:22px;background:#C0C0C0"></div>
<div style="left:975px;top:417px;width:1px;height:22px;background:#C0C0C0"></div>
<div style="left:1048px;top:417px;width:1px;height:22px;background:#C0C0C0"></div>
<div style="left:331px;top:422px;width:12px;height:12px;background:#fff;border:1px solid #ACA899"></div>
<div class="ball" style="left:363px;top:420px;width:14px;height:14px;border-radius:7.0px"></div>
<div class="t" style="left:389px;top:420px">现金</div>
<div class="t" style="left:510px;top:420px;width:55px;text-align:center">收</div>
<div class="t" style="left:565px;top:420px;width:58px;text-align:center"><span class="m">349</span></div>
<div class="t" style="left:757px;top:420px"><span class="m">2010-03-31</span></div>
<div class="t" style="left:831px;top:420px"><span class="m">1399</span></div>
<div class="t" style="left:899px;top:420px"><span class="m">0</span></div>
<div class="t" style="left:980px;top:420px"><span class="m">33429.44</span></div>
<div class="t" style="left:1053px;top:420px;width:64px;overflow:hidden">个人借款还款</div>
<div class="ind" style="left:306px;top:439px;width:11px;height:22px;"></div>
<div style="left:317px;top:439px;width:40px;height:22px;background:#fff"></div>
<div style="left:357px;top:439px;width:760px;height:22px;background:#FFFFE1"></div>
<div style="left:317px;top:460px;width:800px;height:1px;background:#C0C0C0"></div>
<div style="left:357px;top:439px;width:1px;height:22px;background:#C0C0C0"></div>
<div style="left:383px;top:439px;width:1px;height:22px;background:#C0C0C0"></div>
<div style="left:510px;top:439px;width:1px;height:22px;background:#C0C0C0"></div>
<div style="left:565px;top:439px;width:1px;height:22px;background:#C0C0C0"></div>
<div style="left:623px;top:439px;width:1px;height:22px;background:#C0C0C0"></div>
<div style="left:750px;top:439px;width:1px;height:22px;background:#C0C0C0"></div>
<div style="left:825px;top:439px;width:1px;height:22px;background:#C0C0C0"></div>
<div style="left:893px;top:439px;width:1px;height:22px;background:#C0C0C0"></div>
<div style="left:975px;top:439px;width:1px;height:22px;background:#C0C0C0"></div>
<div style="left:1048px;top:439px;width:1px;height:22px;background:#C0C0C0"></div>
<div style="left:331px;top:444px;width:12px;height:12px;background:#fff;border:1px solid #ACA899"></div>
<div class="ball" style="left:363px;top:442px;width:14px;height:14px;border-radius:7.0px"></div>
<div class="t" style="left:389px;top:442px">现金</div>
<div class="t" style="left:510px;top:442px;width:55px;text-align:center">收</div>
<div class="t" style="left:565px;top:442px;width:58px;text-align:center"><span class="m">348</span></div>
<div class="t" style="left:757px;top:442px"><span class="m">2010-03-31</span></div>
<div class="t" style="left:831px;top:442px"><span class="m">2000</span></div>
<div class="t" style="left:899px;top:442px"><span class="m">0</span></div>
<div class="t" style="left:980px;top:442px"><span class="m">32030.44</span></div>
<div class="t" style="left:1053px;top:442px;width:64px;overflow:hidden">个人借款还款</div>
<div class="ind" style="left:306px;top:461px;width:11px;height:22px;"></div>
<div style="left:317px;top:461px;width:40px;height:22px;background:#fff"></div>
<div style="left:357px;top:461px;width:760px;height:22px;background:#FFFFE1"></div>
<div style="left:317px;top:482px;width:800px;height:1px;background:#C0C0C0"></div>
<div style="left:357px;top:461px;width:1px;height:22px;background:#C0C0C0"></div>
<div style="left:383px;top:461px;width:1px;height:22px;background:#C0C0C0"></div>
<div style="left:510px;top:461px;width:1px;height:22px;background:#C0C0C0"></div>
<div style="left:565px;top:461px;width:1px;height:22px;background:#C0C0C0"></div>
<div style="left:623px;top:461px;width:1px;height:22px;background:#C0C0C0"></div>
<div style="left:750px;top:461px;width:1px;height:22px;background:#C0C0C0"></div>
<div style="left:825px;top:461px;width:1px;height:22px;background:#C0C0C0"></div>
<div style="left:893px;top:461px;width:1px;height:22px;background:#C0C0C0"></div>
<div style="left:975px;top:461px;width:1px;height:22px;background:#C0C0C0"></div>
<div style="left:1048px;top:461px;width:1px;height:22px;background:#C0C0C0"></div>
<div style="left:331px;top:466px;width:12px;height:12px;background:#fff;border:1px solid #ACA899"></div>
<div class="ball" style="left:363px;top:464px;width:14px;height:14px;border-radius:7.0px"></div>
<div class="t" style="left:389px;top:464px">现金</div>
<div class="t" style="left:510px;top:464px;width:55px;text-align:center">付</div>
<div class="t" style="left:565px;top:464px;width:58px;text-align:center"><span class="m">347</span></div>
<div class="t" style="left:757px;top:464px"><span class="m">2010-03-31</span></div>
<div class="t" style="left:831px;top:464px"><span class="m">0</span></div>
<div class="t" style="left:899px;top:464px"><span class="m">285</span></div>
<div class="t" style="left:980px;top:464px"><span class="m">30030.44</span></div>
<div class="t" style="left:1053px;top:464px;width:64px;overflow:hidden">应付工资</div>
<div class="ind" style="left:306px;top:483px;width:11px;height:22px;"></div>
<div style="left:317px;top:483px;width:40px;height:22px;background:#fff"></div>
<div style="left:357px;top:483px;width:760px;height:22px;background:#FFFFE1"></div>
<div style="left:317px;top:504px;width:800px;height:1px;background:#C0C0C0"></div>
<div style="left:357px;top:483px;width:1px;height:22px;background:#C0C0C0"></div>
<div style="left:383px;top:483px;width:1px;height:22px;background:#C0C0C0"></div>
<div style="left:510px;top:483px;width:1px;height:22px;background:#C0C0C0"></div>
<div style="left:565px;top:483px;width:1px;height:22px;background:#C0C0C0"></div>
<div style="left:623px;top:483px;width:1px;height:22px;background:#C0C0C0"></div>
<div style="left:750px;top:483px;width:1px;height:22px;background:#C0C0C0"></div>
<div style="left:825px;top:483px;width:1px;height:22px;background:#C0C0C0"></div>
<div style="left:893px;top:483px;width:1px;height:22px;background:#C0C0C0"></div>
<div style="left:975px;top:483px;width:1px;height:22px;background:#C0C0C0"></div>
<div style="left:1048px;top:483px;width:1px;height:22px;background:#C0C0C0"></div>
<div style="left:331px;top:488px;width:12px;height:12px;background:#fff;border:1px solid #ACA899"></div>
<div class="ball" style="left:363px;top:486px;width:14px;height:14px;border-radius:7.0px"></div>
<div class="t" style="left:389px;top:486px">现金</div>
<div class="t" style="left:510px;top:486px;width:55px;text-align:center">付</div>
<div class="t" style="left:565px;top:486px;width:58px;text-align:center"><span class="m">346</span></div>
<div class="t" style="left:757px;top:486px"><span class="m">2010-03-31</span></div>
<div class="t" style="left:831px;top:486px"><span class="m">0</span></div>
<div class="t" style="left:899px;top:486px"><span class="m">2400.2</span></div>
<div class="t" style="left:980px;top:486px"><span class="m">30315.44</span></div>
<div class="t" style="left:1053px;top:486px;width:64px;overflow:hidden">应付工资</div>
<div class="ind" style="left:306px;top:505px;width:11px;height:22px;"></div>
<div style="left:317px;top:505px;width:40px;height:22px;background:#fff"></div>
<div style="left:357px;top:505px;width:760px;height:22px;background:#FFFFE1"></div>
<div style="left:317px;top:526px;width:800px;height:1px;background:#C0C0C0"></div>
<div style="left:357px;top:505px;width:1px;height:22px;background:#C0C0C0"></div>
<div style="left:383px;top:505px;width:1px;height:22px;background:#C0C0C0"></div>
<div style="left:510px;top:505px;width:1px;height:22px;background:#C0C0C0"></div>
<div style="left:565px;top:505px;width:1px;height:22px;background:#C0C0C0"></div>
<div style="left:623px;top:505px;width:1px;height:22px;background:#C0C0C0"></div>
<div style="left:750px;top:505px;width:1px;height:22px;background:#C0C0C0"></div>
<div style="left:825px;top:505px;width:1px;height:22px;background:#C0C0C0"></div>
<div style="left:893px;top:505px;width:1px;height:22px;background:#C0C0C0"></div>
<div style="left:975px;top:505px;width:1px;height:22px;background:#C0C0C0"></div>
<div style="left:1048px;top:505px;width:1px;height:22px;background:#C0C0C0"></div>
<div style="left:331px;top:510px;width:12px;height:12px;background:#fff;border:1px solid #ACA899"></div>
<div class="ball" style="left:363px;top:508px;width:14px;height:14px;border-radius:7.0px"></div>
<div class="t" style="left:389px;top:508px">现金</div>
<div class="t" style="left:510px;top:508px;width:55px;text-align:center">付</div>
<div class="t" style="left:565px;top:508px;width:58px;text-align:center"><span class="m">345</span></div>
<div class="t" style="left:757px;top:508px"><span class="m">2010-03-31</span></div>
<div class="t" style="left:831px;top:508px"><span class="m">0</span></div>
<div class="t" style="left:899px;top:508px"><span class="m">8655.8</span></div>
<div class="t" style="left:980px;top:508px"><span class="m">32715.64</span></div>
<div class="t" style="left:1053px;top:508px;width:64px;overflow:hidden">应付工资</div>
<div class="ind" style="left:306px;top:527px;width:11px;height:22px;"></div>
<div style="left:317px;top:527px;width:40px;height:22px;background:#fff"></div>
<div style="left:357px;top:527px;width:760px;height:22px;background:#FFFFE1"></div>
<div style="left:317px;top:548px;width:800px;height:1px;background:#C0C0C0"></div>
<div style="left:357px;top:527px;width:1px;height:22px;background:#C0C0C0"></div>
<div style="left:383px;top:527px;width:1px;height:22px;background:#C0C0C0"></div>
<div style="left:510px;top:527px;width:1px;height:22px;background:#C0C0C0"></div>
<div style="left:565px;top:527px;width:1px;height:22px;background:#C0C0C0"></div>
<div style="left:623px;top:527px;width:1px;height:22px;background:#C0C0C0"></div>
<div style="left:750px;top:527px;width:1px;height:22px;background:#C0C0C0"></div>
<div style="left:825px;top:527px;width:1px;height:22px;background:#C0C0C0"></div>
<div style="left:893px;top:527px;width:1px;height:22px;background:#C0C0C0"></div>
<div style="left:975px;top:527px;width:1px;height:22px;background:#C0C0C0"></div>
<div style="left:1048px;top:527px;width:1px;height:22px;background:#C0C0C0"></div>
<div style="left:331px;top:532px;width:12px;height:12px;background:#fff;border:1px solid #ACA899"></div>
<div class="ball" style="left:363px;top:530px;width:14px;height:14px;border-radius:7.0px"></div>
<div class="t" style="left:389px;top:530px">现金</div>
<div class="t" style="left:510px;top:530px;width:55px;text-align:center">收</div>
<div class="t" style="left:565px;top:530px;width:58px;text-align:center"><span class="m">344</span></div>
<div class="t" style="left:757px;top:530px"><span class="m">2010-03-31</span></div>
<div class="t" style="left:831px;top:530px"><span class="m">15000</span></div>
<div class="t" style="left:899px;top:530px"><span class="m">0</span></div>
<div class="t" style="left:980px;top:530px"><span class="m">41371.44</span></div>
<div class="t" style="left:1053px;top:530px;width:64px;overflow:hidden">银行取款</div>
<div class="ind" style="left:306px;top:549px;width:11px;height:22px;"></div>
<div style="left:317px;top:549px;width:40px;height:22px;background:#fff"></div>
<div style="left:357px;top:549px;width:760px;height:22px;background:#FFFFE1"></div>
<div style="left:317px;top:570px;width:800px;height:1px;background:#C0C0C0"></div>
<div style="left:357px;top:549px;width:1px;height:22px;background:#C0C0C0"></div>
<div style="left:383px;top:549px;width:1px;height:22px;background:#C0C0C0"></div>
<div style="left:510px;top:549px;width:1px;height:22px;background:#C0C0C0"></div>
<div style="left:565px;top:549px;width:1px;height:22px;background:#C0C0C0"></div>
<div style="left:623px;top:549px;width:1px;height:22px;background:#C0C0C0"></div>
<div style="left:750px;top:549px;width:1px;height:22px;background:#C0C0C0"></div>
<div style="left:825px;top:549px;width:1px;height:22px;background:#C0C0C0"></div>
<div style="left:893px;top:549px;width:1px;height:22px;background:#C0C0C0"></div>
<div style="left:975px;top:549px;width:1px;height:22px;background:#C0C0C0"></div>
<div style="left:1048px;top:549px;width:1px;height:22px;background:#C0C0C0"></div>
<div style="left:331px;top:554px;width:12px;height:12px;background:#fff;border:1px solid #ACA899"></div>
<div class="ball" style="left:363px;top:552px;width:14px;height:14px;border-radius:7.0px"></div>
<div class="t" style="left:389px;top:552px">现金</div>
<div class="t" style="left:510px;top:552px;width:55px;text-align:center">收</div>
<div class="t" style="left:565px;top:552px;width:58px;text-align:center"><span class="m">343</span></div>
<div class="t" style="left:757px;top:552px"><span class="m">2010-03-31</span></div>
<div class="t" style="left:831px;top:552px"><span class="m">900</span></div>
<div class="t" style="left:899px;top:552px"><span class="m">0</span></div>
<div class="t" style="left:980px;top:552px"><span class="m">26371.44</span></div>
<div class="t" style="left:1053px;top:552px;width:64px;overflow:hidden">应收账款</div>
<div class="ind" style="left:306px;top:571px;width:11px;height:22px;"></div>
<div style="left:317px;top:571px;width:40px;height:22px;background:#fff"></div>
<div style="left:357px;top:571px;width:760px;height:22px;background:#FFFFE1"></div>
<div style="left:317px;top:592px;width:800px;height:1px;background:#C0C0C0"></div>
<div style="left:357px;top:571px;width:1px;height:22px;background:#C0C0C0"></div>
<div style="left:383px;top:571px;width:1px;height:22px;background:#C0C0C0"></div>
<div style="left:510px;top:571px;width:1px;height:22px;background:#C0C0C0"></div>
<div style="left:565px;top:571px;width:1px;height:22px;background:#C0C0C0"></div>
<div style="left:623px;top:571px;width:1px;height:22px;background:#C0C0C0"></div>
<div style="left:750px;top:571px;width:1px;height:22px;background:#C0C0C0"></div>
<div style="left:825px;top:571px;width:1px;height:22px;background:#C0C0C0"></div>
<div style="left:893px;top:571px;width:1px;height:22px;background:#C0C0C0"></div>
<div style="left:975px;top:571px;width:1px;height:22px;background:#C0C0C0"></div>
<div style="left:1048px;top:571px;width:1px;height:22px;background:#C0C0C0"></div>
<div style="left:331px;top:576px;width:12px;height:12px;background:#fff;border:1px solid #ACA899"></div>
<div class="ball" style="left:363px;top:574px;width:14px;height:14px;border-radius:7.0px"></div>
<div class="t" style="left:389px;top:574px">现金</div>
<div class="t" style="left:510px;top:574px;width:55px;text-align:center">付</div>
<div class="t" style="left:565px;top:574px;width:58px;text-align:center"><span class="m">342</span></div>
<div class="t" style="left:757px;top:574px"><span class="m">2010-03-31</span></div>
<div class="t" style="left:831px;top:574px"><span class="m">0</span></div>
<div class="t" style="left:899px;top:574px"><span class="m">900</span></div>
<div class="t" style="left:980px;top:574px"><span class="m">25471.44</span></div>
<div class="t" style="left:1053px;top:574px;width:64px;overflow:hidden">应付工资</div>
<div class="ind" style="left:306px;top:593px;width:11px;height:22px;"></div>
<div style="left:317px;top:593px;width:40px;height:22px;background:#fff"></div>
<div style="left:357px;top:593px;width:760px;height:22px;background:#FFFFE1"></div>
<div style="left:317px;top:614px;width:800px;height:1px;background:#C0C0C0"></div>
<div style="left:357px;top:593px;width:1px;height:22px;background:#C0C0C0"></div>
<div style="left:383px;top:593px;width:1px;height:22px;background:#C0C0C0"></div>
<div style="left:510px;top:593px;width:1px;height:22px;background:#C0C0C0"></div>
<div style="left:565px;top:593px;width:1px;height:22px;background:#C0C0C0"></div>
<div style="left:623px;top:593px;width:1px;height:22px;background:#C0C0C0"></div>
<div style="left:750px;top:593px;width:1px;height:22px;background:#C0C0C0"></div>
<div style="left:825px;top:593px;width:1px;height:22px;background:#C0C0C0"></div>
<div style="left:893px;top:593px;width:1px;height:22px;background:#C0C0C0"></div>
<div style="left:975px;top:593px;width:1px;height:22px;background:#C0C0C0"></div>
<div style="left:1048px;top:593px;width:1px;height:22px;background:#C0C0C0"></div>
<div style="left:331px;top:598px;width:12px;height:12px;background:#fff;border:1px solid #ACA899"></div>
<div class="ball" style="left:363px;top:596px;width:14px;height:14px;border-radius:7.0px"></div>
<div class="t" style="left:389px;top:596px">现金</div>
<div class="t" style="left:510px;top:596px;width:55px;text-align:center">收</div>
<div class="t" style="left:565px;top:596px;width:58px;text-align:center"><span class="m">341</span></div>
<div class="t" style="left:757px;top:596px"><span class="m">2010-03-31</span></div>
<div class="t" style="left:831px;top:596px"><span class="m">480</span></div>
<div class="t" style="left:899px;top:596px"><span class="m">0</span></div>
<div class="t" style="left:980px;top:596px"><span class="m">26371.44</span></div>
<div class="t" style="left:1053px;top:596px;width:64px;overflow:hidden">应收账款</div>
<svg style="position:absolute;left:309px;top:290px" width="6" height="11" viewBox="0 0 6 11"><path d="M0 0 L6 5.5 L0 11Z" fill="#000"/></svg>
<div style="left:1117px;top:261px;width:17px;height:367px;background:linear-gradient(90deg,#F3F1EC,#FEFEFB)"></div>
<div class="sbtn" style="left:1117px;top:262px;width:15px;height:15px;"></div>
<svg style="position:absolute;left:1120px;top:266px" width="9" height="6" viewBox="0 0 9 6"><path d="M0.5 5 L4.5 1 L8.5 5" fill="none" stroke="#4D6185" stroke-width="2.6" stroke-linecap="square"/></svg>
<div class="sbtn" style="left:1117px;top:279px;width:15px;height:12px;"></div>
<div class="sbtn" style="left:1117px;top:611px;width:15px;height:15px;"></div>
<svg style="position:absolute;left:1120px;top:616px" width="9" height="6" viewBox="0 0 9 6"><path d="M0.5 1 L4.5 5 L8.5 1" fill="none" stroke="#4D6185" stroke-width="2.6" stroke-linecap="square"/></svg>
<div style="left:306px;top:628px;width:811px;height:16px;background:linear-gradient(#F3F1EC,#FEFEFB)"></div>
<div class="sbtn" style="left:307px;top:628px;width:15px;height:15px;"></div>
<svg style="position:absolute;left:312px;top:632px" width="6" height="9" viewBox="0 0 6 9"><path d="M5 0.5 L1 4.5 L5 8.5" fill="none" stroke="#4D6185" stroke-width="2.6" stroke-linecap="square"/></svg>
<div class="sbtn" style="left:324px;top:628px;width:581px;height:15px;background:linear-gradient(#CCD9FB,#B6CBF8)"></div>
<div style="left:612px;top:632px;width:1px;height:7px;background:#EEF4FE"></div>
<div style="left:614px;top:632px;width:1px;height:7px;background:#EEF4FE"></div>
<div style="left:616px;top:632px;width:1px;height:7px;background:#EEF4FE"></div>
<div style="left:618px;top:632px;width:1px;height:7px;background:#EEF4FE"></div>
<div class="sbtn" style="left:1100px;top:628px;width:15px;height:15px;"></div>
<svg style="position:absolute;left:1105px;top:632px" width="6" height="9" viewBox="0 0 6 9"><path d="M1 0.5 L5 4.5 L1 8.5" fill="none" stroke="#4D6185" stroke-width="2.6" stroke-linecap="square"/></svg>
<div class="btn" style="left:314px;top:658px;width:78px;height:30px;"></div>
<svg style="position:absolute;left:319px;top:666px" width="16" height="14" viewBox="0 0 16 14"><path d="M1 7 L6 12 L15 2" fill="none" stroke="#3CB03C" stroke-width="3"/></svg>
<div class="t" style="left:338px;top:666px;">全选选中</div>
<div class="btn" style="left:394px;top:658px;width:78px;height:30px;"></div>
<svg style="position:absolute;left:399px;top:665px" width="16" height="16" viewBox="0 0 16 16"><path d="M2 2 L14 14 M14 2 L2 14" stroke="#F04828" stroke-width="3"/></svg>
<div class="t" style="left:418px;top:666px;">全部取消</div>
<div class="t" style="left:478px;top:666px;">选择凭证打印模板：</div>
<div style="left:588px;top:662px;width:112px;height:20px;background:#fff;border:1px solid #ACA899;border-right-color:#fff;border-bottom-color:#fff;box-shadow:inset 1px 1px 0 #716F64,inset -1px -1px 0 #ECE9D8"></div>
<div style="left:682px;top:664px;width:16px;height:16px;background:#ECE9D8;border:1px solid #ECE9D8;border-right-color:#716F64;border-bottom-color:#716F64;box-shadow:inset 1px 1px 0 #fff,inset -1px -1px 0 #ACA899"></div>
<svg style="position:absolute;left:686px;top:670px" width="7" height="4" viewBox="0 0 7 4"><path d="M0 0 H7 L3.5 4Z" fill="#000"/></svg>
<div class="t" style="left:591px;top:665px;">收据打印</div>
<div class="btn" style="left:710px;top:658px;width:88px;height:30px;"></div>
<svg style="position:absolute;left:721px;top:664px" width="16" height="18" viewBox="0 0 16 18"><path d="M1 1 H10 L14 5 V17 H1Z" fill="#E4EEFC" stroke="#6A8AC0"/><circle cx="8" cy="9" r="4" fill="none" stroke="#5A7AB0" stroke-width="1.5"/><path d="M5 12 L1 16" stroke="#E07818" stroke-width="2"/></svg>
<div class="t" style="left:740px;top:666px;">预览格式</div>
<div class="btn" style="left:815px;top:658px;width:88px;height:30px;"></div>
<svg style="position:absolute;left:825px;top:665px" width="16" height="15" viewBox="0 0 16 15"><rect x="4" y="1" width="8" height="5" fill="#fff" stroke="#6A8AC0"/><rect x="1" y="6" width="14" height="6" rx="1" fill="#C8D8F0" stroke="#6A8AC0"/><rect x="4" y="10" width="8" height="4" fill="#fff" stroke="#6A8AC0"/></svg>
<div class="t" style="left:844px;top:666px;">批量打印</div>
<div class="btn" style="left:920px;top:658px;width:88px;height:30px;"></div>
<svg style="position:absolute;left:930px;top:666px" width="16" height="14" viewBox="0 0 16 14"><path d="M1 7 L6 12 L15 2" fill="none" stroke="#3CB03C" stroke-width="3"/></svg>
<div class="t" style="left:949px;top:666px;">批量审核</div>
<div class="btn" style="left:1025px;top:658px;width:88px;height:30px;"></div>
<svg style="position:absolute;left:1037px;top:665px" width="15" height="15" viewBox="0 0 15 15"><rect x="0.5" y="0.5" width="14" height="14" rx="1.5" fill="#F07818" stroke="#C85A08"/><path d="M4 4 L11 11 M11 4 L4 11" stroke="#fff" stroke-width="2"/></svg>
<div class="t" style="left:1057px;top:666px;">关闭<span class="m">(C)</span></div>
</body></html>
